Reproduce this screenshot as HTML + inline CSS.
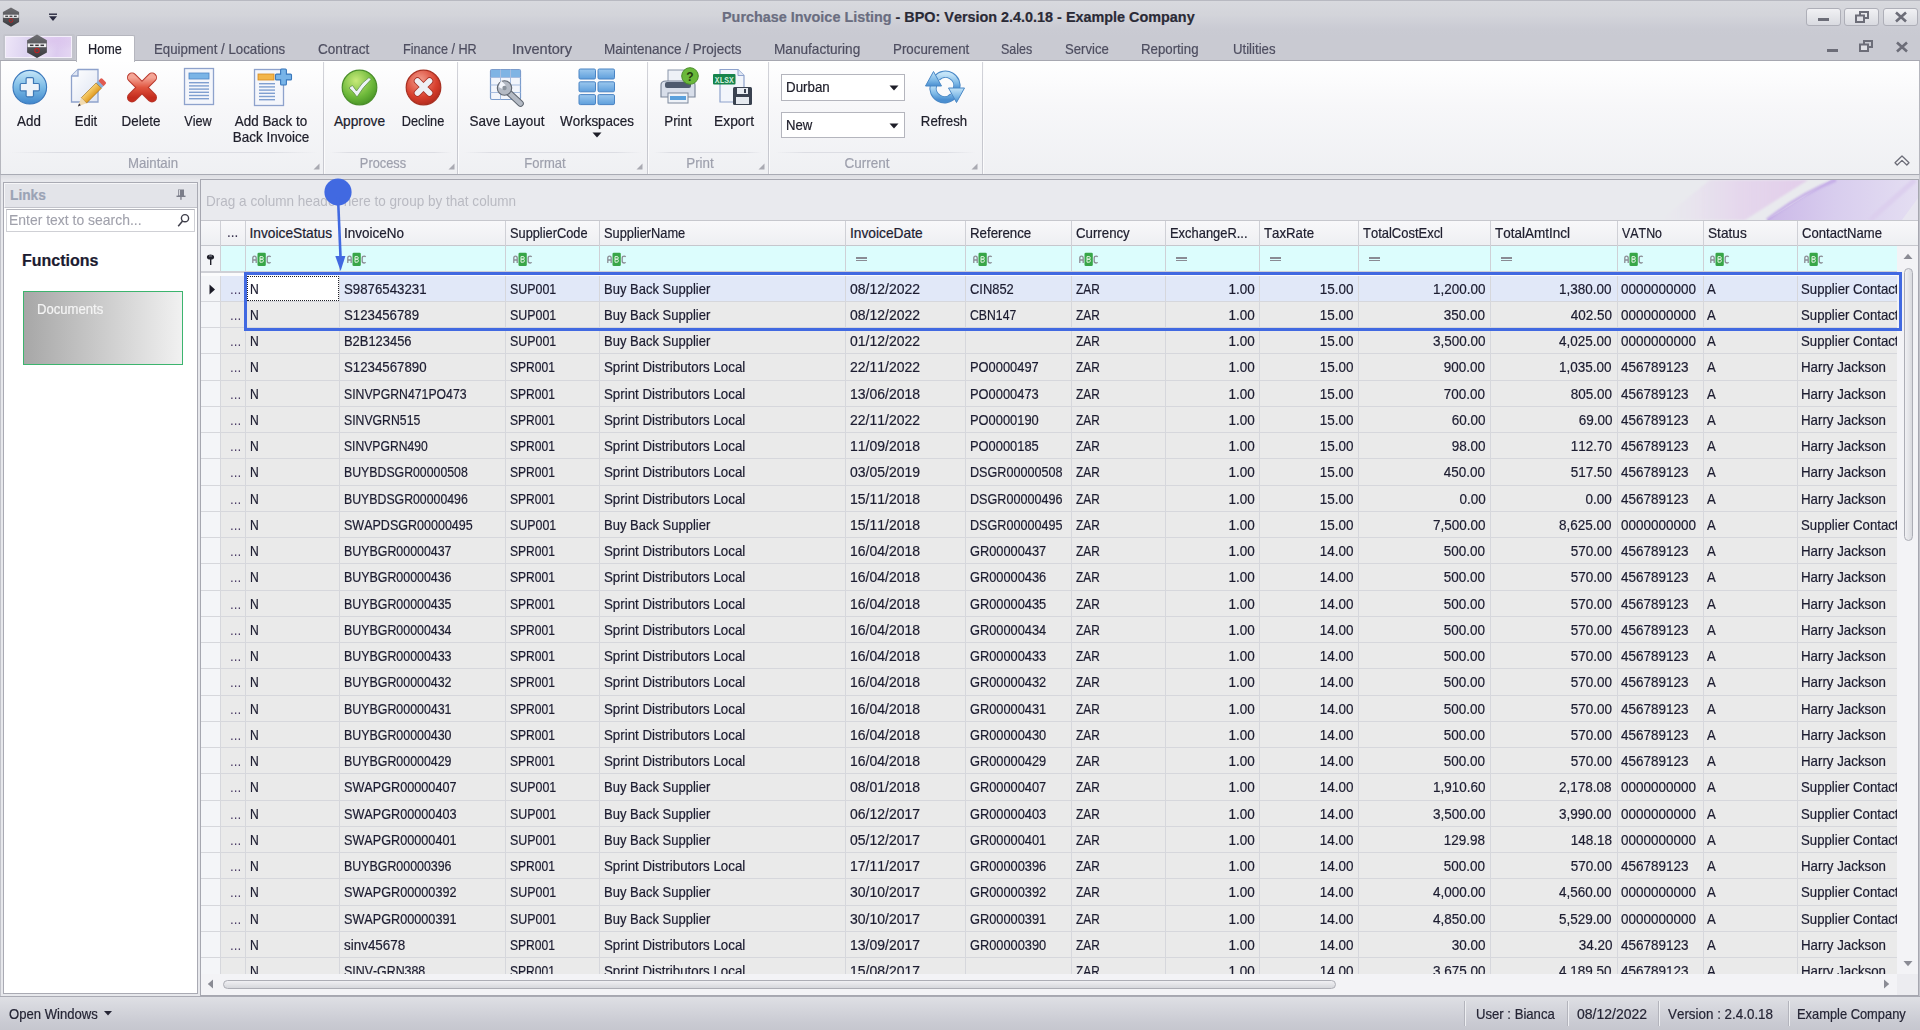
<!DOCTYPE html>
<html><head><meta charset="utf-8"><title>Purchase Invoice Listing</title>
<style>
*{box-sizing:border-box;margin:0;padding:0}
html,body{width:1920px;height:1030px;overflow:hidden;background:#e7e8ec;font-family:"Liberation Sans", sans-serif;font-size:13.75px;color:#1c1c30;position:relative;font-kerning:none}
.a{position:absolute}
.t{position:absolute;white-space:nowrap;line-height:1;-webkit-text-stroke:0.2px currentColor}
svg.a{overflow:visible}
</style></head><body>
<div class="a" style="left:0px;top:0px;width:1920px;height:35px;background:linear-gradient(#d8d9de 0px,#d3d4da 14px,#cacbd3 28px,#c9cad2 35px);border-top:1px solid #b8b9c1"></div>
<div class="a" style="left:0px;top:35px;width:1920px;height:26px;background:#c9cad2;border-bottom:1px solid #a7a8b1"></div>
<div class="a" style="left:0px;top:61px;width:1920px;height:114px;background:linear-gradient(#ffffff 0%,#f7f7f9 40%,#eff0f3 100%);border-bottom:1px solid #a9abb4;border-left:1px solid #b6b7be;border-right:1px solid #b6b7be"></div>
<div class="a" style="left:0px;top:175px;width:1920px;height:6px;background:linear-gradient(#dcdde2,#e9e9ed)"></div>
<div class="a" style="left:0px;top:175px;width:1px;height:821px;background:#c2c3ca"></div>
<div class="a" style="left:1919px;top:175px;width:1px;height:821px;background:#c2c3ca"></div>
<div class="a" style="left:0px;top:996px;width:1920px;height:34px;background:linear-gradient(#dedfe4,#c9cad2 80%,#c6c7cf);border-top:1px solid #a9aab3"></div>
<div class="a" style="left:200px;top:179px;width:1719px;height:817px;background:#f4f4f7;border:1px solid #a6a7b0"></div>
<div class="a" style="left:201px;top:180px;width:1717px;height:40px;background:#e9eaee"></div>
<svg class="a" style="left:1640px;top:180px;overflow:hidden" width="278" height="40" viewBox="0 0 278 40"><defs><linearGradient id="pk" x1="0" y1="0" x2="1" y2="0"><stop offset="0" stop-color="#e6dbee" stop-opacity="0"/><stop offset=".55" stop-color="#e4d2ec" stop-opacity=".8"/><stop offset="1" stop-color="#e2cdea"/></linearGradient><linearGradient id="pp" x1="0" y1="0" x2="1" y2="0"><stop offset="0" stop-color="#cbb8e8"/><stop offset=".45" stop-color="#d8cdee"/><stop offset="1" stop-color="#e4def2"/></linearGradient><filter id="bl"><feGaussianBlur stdDeviation="1.2"/></filter></defs><path d="M20 40 L105 40 L168 0 L70 0 Z" fill="url(#pk)" filter="url(#bl)"/><path d="M127 40 L278 40 L278 0 L191 0 Z" fill="url(#pp)"/><path d="M127 40 Q160 14 196 0" stroke="#c2a9e6" stroke-width="3" fill="none" filter="url(#bl)" opacity=".9"/><path d="M230 40 Q250 22 275 0" stroke="#dccfee" stroke-width="5" fill="none" filter="url(#bl)"/><path d="M262 40 L278 18 L278 40 Z" fill="#e8e6f0"/></svg>
<div class="t" style="left:206px;top:195px;transform:scaleX(0.9844);transform-origin:left center;color:#b9bac2;-webkit-text-stroke:0">Drag a column header here to group by that column</div>
<div class="a" style="left:201px;top:220px;width:1717px;height:25.5px;background:linear-gradient(#f8f8fa,#eeeff2);border-top:1px solid #c6c7cd;border-bottom:1px solid #c6c7cd"></div>
<div class="a" style="left:220.0px;top:221px;width:1px;height:24.5px;background:#cfd0d6"></div>
<div class="a" style="left:244.5px;top:221px;width:1px;height:24.5px;background:#cfd0d6"></div>
<div class="a" style="left:339.0px;top:221px;width:1px;height:24.5px;background:#cfd0d6"></div>
<div class="a" style="left:505.0px;top:221px;width:1px;height:24.5px;background:#cfd0d6"></div>
<div class="a" style="left:599.0px;top:221px;width:1px;height:24.5px;background:#cfd0d6"></div>
<div class="a" style="left:845.0px;top:221px;width:1px;height:24.5px;background:#cfd0d6"></div>
<div class="a" style="left:965.0px;top:221px;width:1px;height:24.5px;background:#cfd0d6"></div>
<div class="a" style="left:1071.0px;top:221px;width:1px;height:24.5px;background:#cfd0d6"></div>
<div class="a" style="left:1165.0px;top:221px;width:1px;height:24.5px;background:#cfd0d6"></div>
<div class="a" style="left:1259.0px;top:221px;width:1px;height:24.5px;background:#cfd0d6"></div>
<div class="a" style="left:1357.5px;top:221px;width:1px;height:24.5px;background:#cfd0d6"></div>
<div class="a" style="left:1490.0px;top:221px;width:1px;height:24.5px;background:#cfd0d6"></div>
<div class="a" style="left:1616.5px;top:221px;width:1px;height:24.5px;background:#cfd0d6"></div>
<div class="a" style="left:1702.5px;top:221px;width:1px;height:24.5px;background:#cfd0d6"></div>
<div class="a" style="left:1796.5px;top:221px;width:1px;height:24.5px;background:#cfd0d6"></div>
<div class="t" style="left:249.5px;top:221px;line-height:25.5px;color:#202030">InvoiceStatus</div>
<div class="t" style="left:344.0px;top:221px;transform:scaleX(0.9813);transform-origin:left center;line-height:25.5px;color:#202030">InvoiceNo</div>
<div class="t" style="left:510.0px;top:221px;transform:scaleX(0.9302);transform-origin:left center;line-height:25.5px;color:#202030">SupplierCode</div>
<div class="t" style="left:604.0px;top:221px;transform:scaleX(0.9326);transform-origin:left center;line-height:25.5px;color:#202030">SupplierName</div>
<div class="t" style="left:850.0px;top:221px;line-height:25.5px;color:#202030">InvoiceDate</div>
<div class="t" style="left:970.0px;top:221px;transform:scaleX(0.9655);transform-origin:left center;line-height:25.5px;color:#202030">Reference</div>
<div class="t" style="left:1076.0px;top:221px;transform:scaleX(0.9636);transform-origin:left center;line-height:25.5px;color:#202030">Currency</div>
<div class="t" style="left:1170.0px;top:221px;transform:scaleX(0.9389);transform-origin:left center;line-height:25.5px;color:#202030">ExchangeR...</div>
<div class="t" style="left:1264.0px;top:221px;transform:scaleX(0.9622);transform-origin:left center;line-height:25.5px;color:#202030">TaxRate</div>
<div class="t" style="left:1362.5px;top:221px;transform:scaleX(0.9432);transform-origin:left center;line-height:25.5px;color:#202030">TotalCostExcl</div>
<div class="t" style="left:1495.0px;top:221px;transform:scaleX(0.9815);transform-origin:left center;line-height:25.5px;color:#202030">TotalAmtIncl</div>
<div class="t" style="left:1621.5px;top:221px;transform:scaleX(0.9026);transform-origin:left center;line-height:25.5px;color:#202030">VATNo</div>
<div class="t" style="left:1707.5px;top:221px;transform:scaleX(0.9941);transform-origin:left center;line-height:25.5px;color:#202030">Status</div>
<div class="t" style="left:1801.5px;top:221px;transform:scaleX(0.9517);transform-origin:left center;line-height:25.5px;color:#202030">ContactName</div>
<div class="t" style="left:227px;top:220px;transform:scaleX(0.9816);transform-origin:left center;line-height:25.5px;color:#3a3450;-webkit-text-stroke:0.1px currentColor">...</div>
<div class="a" style="left:221px;top:245.5px;width:1676px;height:26.0px;background:#dcfdfd"></div>
<div class="a" style="left:201px;top:245.5px;width:20px;height:26.0px;background:#f3f4f7"></div>
<div class="a" style="left:201px;top:271.0px;width:1696px;height:1.5px;background:#cfd0d6"></div>
<div class="a" style="left:201px;top:272.5px;width:1696px;height:3px;background:#fbfbfc"></div>
<div class="a" style="left:220.0px;top:245.5px;width:1px;height:26.0px;background:#cfd0d6"></div>
<div class="a" style="left:244.5px;top:245.5px;width:1px;height:26.0px;background:#cfd0d6"></div>
<div class="a" style="left:339.0px;top:245.5px;width:1px;height:26.0px;background:#cfd0d6"></div>
<div class="a" style="left:505.0px;top:245.5px;width:1px;height:26.0px;background:#cfd0d6"></div>
<div class="a" style="left:599.0px;top:245.5px;width:1px;height:26.0px;background:#cfd0d6"></div>
<div class="a" style="left:845.0px;top:245.5px;width:1px;height:26.0px;background:#cfd0d6"></div>
<div class="a" style="left:965.0px;top:245.5px;width:1px;height:26.0px;background:#cfd0d6"></div>
<div class="a" style="left:1071.0px;top:245.5px;width:1px;height:26.0px;background:#cfd0d6"></div>
<div class="a" style="left:1165.0px;top:245.5px;width:1px;height:26.0px;background:#cfd0d6"></div>
<div class="a" style="left:1259.0px;top:245.5px;width:1px;height:26.0px;background:#cfd0d6"></div>
<div class="a" style="left:1357.5px;top:245.5px;width:1px;height:26.0px;background:#cfd0d6"></div>
<div class="a" style="left:1490.0px;top:245.5px;width:1px;height:26.0px;background:#cfd0d6"></div>
<div class="a" style="left:1616.5px;top:245.5px;width:1px;height:26.0px;background:#cfd0d6"></div>
<div class="a" style="left:1702.5px;top:245.5px;width:1px;height:26.0px;background:#cfd0d6"></div>
<div class="a" style="left:1796.5px;top:245.5px;width:1px;height:26.0px;background:#cfd0d6"></div>
<div class="a" style="left:1896.5px;top:245.5px;width:1px;height:26.0px;background:#cfd0d6"></div>
<svg class="a" style="left:206px;top:254px" width="10" height="12" viewBox="0 0 10 12"><ellipse cx="4.5" cy="3" rx="3.6" ry="2.6" fill="#22222c"/><rect x="1" y="2.6" width="7" height="1.2" fill="#22222c"/><rect x="4" y="4" width="1.4" height="7" fill="#22222c"/><rect x="3" y="1.5" width="3" height="1" fill="#8a8a96"/></svg>
<svg class="a" style="left:252px;top:252px" width="20" height="15" viewBox="0 0 20 15"><path d="M0.8 11 V6.2 Q0.8 4.2 2.5 4.2 Q4.2 4.2 4.2 6.2 V11 M0.8 8 H4.2" stroke="#8b8c94" stroke-width="1.3" fill="none"/><rect x="5.5" y="0.7" width="8.3" height="13.3" rx="1.3" fill="#38a648"/><path d="M8 4.6 h2 q1.3 0 1.3 1.3 q0 1.3 -1.3 1.3 h-2 z M8 7.2 h2.1 q1.3 0 1.3 1.5 q0 1.5 -1.3 1.5 h-2.1 z" stroke="#e2f2e2" stroke-width="1" fill="none"/><path d="M18.6 5 Q18.2 4.2 17.2 4.2 Q15.2 4.2 15.2 6 V9.2 Q15.2 11 17.2 11 Q18.2 11 18.6 10.2" stroke="#8b8c94" stroke-width="1.3" fill="none"/></svg>
<svg class="a" style="left:346.5px;top:252px" width="20" height="15" viewBox="0 0 20 15"><path d="M0.8 11 V6.2 Q0.8 4.2 2.5 4.2 Q4.2 4.2 4.2 6.2 V11 M0.8 8 H4.2" stroke="#8b8c94" stroke-width="1.3" fill="none"/><rect x="5.5" y="0.7" width="8.3" height="13.3" rx="1.3" fill="#38a648"/><path d="M8 4.6 h2 q1.3 0 1.3 1.3 q0 1.3 -1.3 1.3 h-2 z M8 7.2 h2.1 q1.3 0 1.3 1.5 q0 1.5 -1.3 1.5 h-2.1 z" stroke="#e2f2e2" stroke-width="1" fill="none"/><path d="M18.6 5 Q18.2 4.2 17.2 4.2 Q15.2 4.2 15.2 6 V9.2 Q15.2 11 17.2 11 Q18.2 11 18.6 10.2" stroke="#8b8c94" stroke-width="1.3" fill="none"/></svg>
<svg class="a" style="left:512.5px;top:252px" width="20" height="15" viewBox="0 0 20 15"><path d="M0.8 11 V6.2 Q0.8 4.2 2.5 4.2 Q4.2 4.2 4.2 6.2 V11 M0.8 8 H4.2" stroke="#8b8c94" stroke-width="1.3" fill="none"/><rect x="5.5" y="0.7" width="8.3" height="13.3" rx="1.3" fill="#38a648"/><path d="M8 4.6 h2 q1.3 0 1.3 1.3 q0 1.3 -1.3 1.3 h-2 z M8 7.2 h2.1 q1.3 0 1.3 1.5 q0 1.5 -1.3 1.5 h-2.1 z" stroke="#e2f2e2" stroke-width="1" fill="none"/><path d="M18.6 5 Q18.2 4.2 17.2 4.2 Q15.2 4.2 15.2 6 V9.2 Q15.2 11 17.2 11 Q18.2 11 18.6 10.2" stroke="#8b8c94" stroke-width="1.3" fill="none"/></svg>
<svg class="a" style="left:606.5px;top:252px" width="20" height="15" viewBox="0 0 20 15"><path d="M0.8 11 V6.2 Q0.8 4.2 2.5 4.2 Q4.2 4.2 4.2 6.2 V11 M0.8 8 H4.2" stroke="#8b8c94" stroke-width="1.3" fill="none"/><rect x="5.5" y="0.7" width="8.3" height="13.3" rx="1.3" fill="#38a648"/><path d="M8 4.6 h2 q1.3 0 1.3 1.3 q0 1.3 -1.3 1.3 h-2 z M8 7.2 h2.1 q1.3 0 1.3 1.5 q0 1.5 -1.3 1.5 h-2.1 z" stroke="#e2f2e2" stroke-width="1" fill="none"/><path d="M18.6 5 Q18.2 4.2 17.2 4.2 Q15.2 4.2 15.2 6 V9.2 Q15.2 11 17.2 11 Q18.2 11 18.6 10.2" stroke="#8b8c94" stroke-width="1.3" fill="none"/></svg>
<div class="a" style="left:856.0px;top:257.3px;width:11px;height:1.6px;background:#8a8b94"></div>
<div class="a" style="left:856.0px;top:259.90000000000003px;width:11px;height:1.6px;background:#8a8b94"></div>
<svg class="a" style="left:972.5px;top:252px" width="20" height="15" viewBox="0 0 20 15"><path d="M0.8 11 V6.2 Q0.8 4.2 2.5 4.2 Q4.2 4.2 4.2 6.2 V11 M0.8 8 H4.2" stroke="#8b8c94" stroke-width="1.3" fill="none"/><rect x="5.5" y="0.7" width="8.3" height="13.3" rx="1.3" fill="#38a648"/><path d="M8 4.6 h2 q1.3 0 1.3 1.3 q0 1.3 -1.3 1.3 h-2 z M8 7.2 h2.1 q1.3 0 1.3 1.5 q0 1.5 -1.3 1.5 h-2.1 z" stroke="#e2f2e2" stroke-width="1" fill="none"/><path d="M18.6 5 Q18.2 4.2 17.2 4.2 Q15.2 4.2 15.2 6 V9.2 Q15.2 11 17.2 11 Q18.2 11 18.6 10.2" stroke="#8b8c94" stroke-width="1.3" fill="none"/></svg>
<svg class="a" style="left:1078.5px;top:252px" width="20" height="15" viewBox="0 0 20 15"><path d="M0.8 11 V6.2 Q0.8 4.2 2.5 4.2 Q4.2 4.2 4.2 6.2 V11 M0.8 8 H4.2" stroke="#8b8c94" stroke-width="1.3" fill="none"/><rect x="5.5" y="0.7" width="8.3" height="13.3" rx="1.3" fill="#38a648"/><path d="M8 4.6 h2 q1.3 0 1.3 1.3 q0 1.3 -1.3 1.3 h-2 z M8 7.2 h2.1 q1.3 0 1.3 1.5 q0 1.5 -1.3 1.5 h-2.1 z" stroke="#e2f2e2" stroke-width="1" fill="none"/><path d="M18.6 5 Q18.2 4.2 17.2 4.2 Q15.2 4.2 15.2 6 V9.2 Q15.2 11 17.2 11 Q18.2 11 18.6 10.2" stroke="#8b8c94" stroke-width="1.3" fill="none"/></svg>
<div class="a" style="left:1176.0px;top:257.3px;width:11px;height:1.6px;background:#8a8b94"></div>
<div class="a" style="left:1176.0px;top:259.90000000000003px;width:11px;height:1.6px;background:#8a8b94"></div>
<div class="a" style="left:1270.0px;top:257.3px;width:11px;height:1.6px;background:#8a8b94"></div>
<div class="a" style="left:1270.0px;top:259.90000000000003px;width:11px;height:1.6px;background:#8a8b94"></div>
<div class="a" style="left:1368.5px;top:257.3px;width:11px;height:1.6px;background:#8a8b94"></div>
<div class="a" style="left:1368.5px;top:259.90000000000003px;width:11px;height:1.6px;background:#8a8b94"></div>
<div class="a" style="left:1501.0px;top:257.3px;width:11px;height:1.6px;background:#8a8b94"></div>
<div class="a" style="left:1501.0px;top:259.90000000000003px;width:11px;height:1.6px;background:#8a8b94"></div>
<svg class="a" style="left:1624px;top:252px" width="20" height="15" viewBox="0 0 20 15"><path d="M0.8 11 V6.2 Q0.8 4.2 2.5 4.2 Q4.2 4.2 4.2 6.2 V11 M0.8 8 H4.2" stroke="#8b8c94" stroke-width="1.3" fill="none"/><rect x="5.5" y="0.7" width="8.3" height="13.3" rx="1.3" fill="#38a648"/><path d="M8 4.6 h2 q1.3 0 1.3 1.3 q0 1.3 -1.3 1.3 h-2 z M8 7.2 h2.1 q1.3 0 1.3 1.5 q0 1.5 -1.3 1.5 h-2.1 z" stroke="#e2f2e2" stroke-width="1" fill="none"/><path d="M18.6 5 Q18.2 4.2 17.2 4.2 Q15.2 4.2 15.2 6 V9.2 Q15.2 11 17.2 11 Q18.2 11 18.6 10.2" stroke="#8b8c94" stroke-width="1.3" fill="none"/></svg>
<svg class="a" style="left:1710px;top:252px" width="20" height="15" viewBox="0 0 20 15"><path d="M0.8 11 V6.2 Q0.8 4.2 2.5 4.2 Q4.2 4.2 4.2 6.2 V11 M0.8 8 H4.2" stroke="#8b8c94" stroke-width="1.3" fill="none"/><rect x="5.5" y="0.7" width="8.3" height="13.3" rx="1.3" fill="#38a648"/><path d="M8 4.6 h2 q1.3 0 1.3 1.3 q0 1.3 -1.3 1.3 h-2 z M8 7.2 h2.1 q1.3 0 1.3 1.5 q0 1.5 -1.3 1.5 h-2.1 z" stroke="#e2f2e2" stroke-width="1" fill="none"/><path d="M18.6 5 Q18.2 4.2 17.2 4.2 Q15.2 4.2 15.2 6 V9.2 Q15.2 11 17.2 11 Q18.2 11 18.6 10.2" stroke="#8b8c94" stroke-width="1.3" fill="none"/></svg>
<svg class="a" style="left:1804px;top:252px" width="20" height="15" viewBox="0 0 20 15"><path d="M0.8 11 V6.2 Q0.8 4.2 2.5 4.2 Q4.2 4.2 4.2 6.2 V11 M0.8 8 H4.2" stroke="#8b8c94" stroke-width="1.3" fill="none"/><rect x="5.5" y="0.7" width="8.3" height="13.3" rx="1.3" fill="#38a648"/><path d="M8 4.6 h2 q1.3 0 1.3 1.3 q0 1.3 -1.3 1.3 h-2 z M8 7.2 h2.1 q1.3 0 1.3 1.5 q0 1.5 -1.3 1.5 h-2.1 z" stroke="#e2f2e2" stroke-width="1" fill="none"/><path d="M18.6 5 Q18.2 4.2 17.2 4.2 Q15.2 4.2 15.2 6 V9.2 Q15.2 11 17.2 11 Q18.2 11 18.6 10.2" stroke="#8b8c94" stroke-width="1.3" fill="none"/></svg>
<div class="a" style="left:201px;top:274.5px;width:1696px;height:699.5px;overflow:hidden">
<div class="a" style="left:20px;top:1.0px;width:1676px;height:699.5px;background:#eaeaea"></div>
<div class="a" style="left:0px;top:1.0px;width:20px;height:699.5px;background:#f4f5f8"></div>
<div class="a" style="left:20px;top:1.0px;width:1676px;height:26.25px;background:#e1e8f8"></div>
<div class="a" style="left:45px;top:1.0px;width:93px;height:26.25px;background:#ffffff"></div>
<div class="a" style="left:19.0px;top:1.0px;width:1px;height:699.5px;background:#d6d7dc"></div>
<div class="a" style="left:43.5px;top:1.0px;width:1px;height:699.5px;background:#d6d7dc"></div>
<div class="a" style="left:138.0px;top:1.0px;width:1px;height:699.5px;background:#d6d7dc"></div>
<div class="a" style="left:304.0px;top:1.0px;width:1px;height:699.5px;background:#d6d7dc"></div>
<div class="a" style="left:398.0px;top:1.0px;width:1px;height:699.5px;background:#d6d7dc"></div>
<div class="a" style="left:644.0px;top:1.0px;width:1px;height:699.5px;background:#d6d7dc"></div>
<div class="a" style="left:764.0px;top:1.0px;width:1px;height:699.5px;background:#d6d7dc"></div>
<div class="a" style="left:870.0px;top:1.0px;width:1px;height:699.5px;background:#d6d7dc"></div>
<div class="a" style="left:964.0px;top:1.0px;width:1px;height:699.5px;background:#d6d7dc"></div>
<div class="a" style="left:1058.0px;top:1.0px;width:1px;height:699.5px;background:#d6d7dc"></div>
<div class="a" style="left:1156.5px;top:1.0px;width:1px;height:699.5px;background:#d6d7dc"></div>
<div class="a" style="left:1289.0px;top:1.0px;width:1px;height:699.5px;background:#d6d7dc"></div>
<div class="a" style="left:1415.5px;top:1.0px;width:1px;height:699.5px;background:#d6d7dc"></div>
<div class="a" style="left:1501.5px;top:1.0px;width:1px;height:699.5px;background:#d6d7dc"></div>
<div class="a" style="left:1595.5px;top:1.0px;width:1px;height:699.5px;background:#d6d7dc"></div>
<div class="a" style="left:1695.5px;top:1.0px;width:1px;height:699.5px;background:#d6d7dc"></div>
<div class="a" style="left:0px;top:26.25px;width:1696px;height:1px;background:#d6d7dc"></div>
<div class="a" style="left:0px;top:52.5px;width:1696px;height:1px;background:#d6d7dc"></div>
<div class="a" style="left:0px;top:78.75px;width:1696px;height:1px;background:#d6d7dc"></div>
<div class="a" style="left:0px;top:105.0px;width:1696px;height:1px;background:#d6d7dc"></div>
<div class="a" style="left:0px;top:131.25px;width:1696px;height:1px;background:#d6d7dc"></div>
<div class="a" style="left:0px;top:157.5px;width:1696px;height:1px;background:#d6d7dc"></div>
<div class="a" style="left:0px;top:183.75px;width:1696px;height:1px;background:#d6d7dc"></div>
<div class="a" style="left:0px;top:210.0px;width:1696px;height:1px;background:#d6d7dc"></div>
<div class="a" style="left:0px;top:236.25px;width:1696px;height:1px;background:#d6d7dc"></div>
<div class="a" style="left:0px;top:262.5px;width:1696px;height:1px;background:#d6d7dc"></div>
<div class="a" style="left:0px;top:288.75px;width:1696px;height:1px;background:#d6d7dc"></div>
<div class="a" style="left:0px;top:315.0px;width:1696px;height:1px;background:#d6d7dc"></div>
<div class="a" style="left:0px;top:341.25px;width:1696px;height:1px;background:#d6d7dc"></div>
<div class="a" style="left:0px;top:367.5px;width:1696px;height:1px;background:#d6d7dc"></div>
<div class="a" style="left:0px;top:393.75px;width:1696px;height:1px;background:#d6d7dc"></div>
<div class="a" style="left:0px;top:420.0px;width:1696px;height:1px;background:#d6d7dc"></div>
<div class="a" style="left:0px;top:446.25px;width:1696px;height:1px;background:#d6d7dc"></div>
<div class="a" style="left:0px;top:472.5px;width:1696px;height:1px;background:#d6d7dc"></div>
<div class="a" style="left:0px;top:498.75px;width:1696px;height:1px;background:#d6d7dc"></div>
<div class="a" style="left:0px;top:525.0px;width:1696px;height:1px;background:#d6d7dc"></div>
<div class="a" style="left:0px;top:551.25px;width:1696px;height:1px;background:#d6d7dc"></div>
<div class="a" style="left:0px;top:577.5px;width:1696px;height:1px;background:#d6d7dc"></div>
<div class="a" style="left:0px;top:603.75px;width:1696px;height:1px;background:#d6d7dc"></div>
<div class="a" style="left:0px;top:630.0px;width:1696px;height:1px;background:#d6d7dc"></div>
<div class="a" style="left:0px;top:656.25px;width:1696px;height:1px;background:#d6d7dc"></div>
<div class="a" style="left:0px;top:682.5px;width:1696px;height:1px;background:#d6d7dc"></div>
<div class="a" style="left:0px;top:708.75px;width:1696px;height:1px;background:#d6d7dc"></div>
<div class="t" style="left:49px;top:2.0px;transform:scaleX(0.8812);transform-origin:left center;line-height:26.25px">N</div>
<div class="t" style="left:29px;top:2.0px;transform:scaleX(0.9816);transform-origin:left center;line-height:26.25px;color:#4a3c66;-webkit-text-stroke:0">...</div>
<div class="t" style="left:142.5px;top:2.0px;transform:scaleX(0.9633);transform-origin:left center;line-height:26.25px">S9876543231</div>
<div class="t" style="left:308.5px;top:2.0px;transform:scaleX(0.9031);transform-origin:left center;line-height:26.25px">SUP001</div>
<div class="t" style="left:402.5px;top:2.0px;transform:scaleX(0.9457);transform-origin:left center;line-height:26.25px">Buy Back Supplier</div>
<div class="t" style="left:648.5px;top:2.0px;transform:scaleX(1.0172);transform-origin:left center;line-height:26.25px">08/12/2022</div>
<div class="t" style="left:768.5px;top:2.0px;transform:scaleX(0.9384);transform-origin:left center;line-height:26.25px">CIN852</div>
<div class="t" style="left:874.5px;top:2.0px;transform:scaleX(0.8636);transform-origin:left center;line-height:26.25px">ZAR</div>
<div class="t" style="right:642.5px;top:2.0px;transform:scaleX(0.9809);transform-origin:right center;line-height:26.25px">1.00</div>
<div class="t" style="right:544px;top:2.0px;transform:scaleX(0.9809);transform-origin:right center;line-height:26.25px">15.00</div>
<div class="t" style="right:411.5px;top:2.0px;transform:scaleX(0.9809);transform-origin:right center;line-height:26.25px">1,200.00</div>
<div class="t" style="right:285px;top:2.0px;transform:scaleX(0.9809);transform-origin:right center;line-height:26.25px">1,380.00</div>
<div class="t" style="left:1420px;top:2.0px;transform:scaleX(0.9808);transform-origin:left center;line-height:26.25px">0000000000</div>
<div class="t" style="left:1506px;top:2.0px;transform:scaleX(0.9541);transform-origin:left center;line-height:26.25px">A</div>
<div class="t" style="left:1600px;top:2.0px;transform:scaleX(0.9591);transform-origin:left center;line-height:26.25px">Supplier Contact</div>
<div class="t" style="left:49px;top:28.25px;transform:scaleX(0.8812);transform-origin:left center;line-height:26.25px">N</div>
<div class="t" style="left:29px;top:28.25px;transform:scaleX(0.9816);transform-origin:left center;line-height:26.25px;color:#4a3c66;-webkit-text-stroke:0">...</div>
<div class="t" style="left:142.5px;top:28.25px;transform:scaleX(0.9616);transform-origin:left center;line-height:26.25px">S123456789</div>
<div class="t" style="left:308.5px;top:28.25px;transform:scaleX(0.9031);transform-origin:left center;line-height:26.25px">SUP001</div>
<div class="t" style="left:402.5px;top:28.25px;transform:scaleX(0.9457);transform-origin:left center;line-height:26.25px">Buy Back Supplier</div>
<div class="t" style="left:648.5px;top:28.25px;transform:scaleX(1.0172);transform-origin:left center;line-height:26.25px">08/12/2022</div>
<div class="t" style="left:768.5px;top:28.25px;transform:scaleX(0.8899);transform-origin:left center;line-height:26.25px">CBN147</div>
<div class="t" style="left:874.5px;top:28.25px;transform:scaleX(0.8636);transform-origin:left center;line-height:26.25px">ZAR</div>
<div class="t" style="right:642.5px;top:28.25px;transform:scaleX(0.9809);transform-origin:right center;line-height:26.25px">1.00</div>
<div class="t" style="right:544px;top:28.25px;transform:scaleX(0.9809);transform-origin:right center;line-height:26.25px">15.00</div>
<div class="t" style="right:411.5px;top:28.25px;transform:scaleX(0.9808);transform-origin:right center;line-height:26.25px">350.00</div>
<div class="t" style="right:285px;top:28.25px;transform:scaleX(0.9808);transform-origin:right center;line-height:26.25px">402.50</div>
<div class="t" style="left:1420px;top:28.25px;transform:scaleX(0.9808);transform-origin:left center;line-height:26.25px">0000000000</div>
<div class="t" style="left:1506px;top:28.25px;transform:scaleX(0.9541);transform-origin:left center;line-height:26.25px">A</div>
<div class="t" style="left:1600px;top:28.25px;transform:scaleX(0.9591);transform-origin:left center;line-height:26.25px">Supplier Contact</div>
<div class="t" style="left:49px;top:54.5px;transform:scaleX(0.8812);transform-origin:left center;line-height:26.25px">N</div>
<div class="t" style="left:29px;top:54.5px;transform:scaleX(0.9816);transform-origin:left center;line-height:26.25px;color:#4a3c66;-webkit-text-stroke:0">...</div>
<div class="t" style="left:142.5px;top:54.5px;transform:scaleX(0.9392);transform-origin:left center;line-height:26.25px">B2B123456</div>
<div class="t" style="left:308.5px;top:54.5px;transform:scaleX(0.9031);transform-origin:left center;line-height:26.25px">SUP001</div>
<div class="t" style="left:402.5px;top:54.5px;transform:scaleX(0.9457);transform-origin:left center;line-height:26.25px">Buy Back Supplier</div>
<div class="t" style="left:648.5px;top:54.5px;transform:scaleX(1.0172);transform-origin:left center;line-height:26.25px">01/12/2022</div>
<div class="t" style="left:874.5px;top:54.5px;transform:scaleX(0.8636);transform-origin:left center;line-height:26.25px">ZAR</div>
<div class="t" style="right:642.5px;top:54.5px;transform:scaleX(0.9809);transform-origin:right center;line-height:26.25px">1.00</div>
<div class="t" style="right:544px;top:54.5px;transform:scaleX(0.9809);transform-origin:right center;line-height:26.25px">15.00</div>
<div class="t" style="right:411.5px;top:54.5px;transform:scaleX(0.9809);transform-origin:right center;line-height:26.25px">3,500.00</div>
<div class="t" style="right:285px;top:54.5px;transform:scaleX(0.9809);transform-origin:right center;line-height:26.25px">4,025.00</div>
<div class="t" style="left:1420px;top:54.5px;transform:scaleX(0.9808);transform-origin:left center;line-height:26.25px">0000000000</div>
<div class="t" style="left:1506px;top:54.5px;transform:scaleX(0.9541);transform-origin:left center;line-height:26.25px">A</div>
<div class="t" style="left:1600px;top:54.5px;transform:scaleX(0.9591);transform-origin:left center;line-height:26.25px">Supplier Contact</div>
<div class="t" style="left:49px;top:80.75px;transform:scaleX(0.8812);transform-origin:left center;line-height:26.25px">N</div>
<div class="t" style="left:29px;top:80.75px;transform:scaleX(0.9816);transform-origin:left center;line-height:26.25px;color:#4a3c66;-webkit-text-stroke:0">...</div>
<div class="t" style="left:142.5px;top:80.75px;transform:scaleX(0.9633);transform-origin:left center;line-height:26.25px">S1234567890</div>
<div class="t" style="left:308.5px;top:80.75px;transform:scaleX(0.8787);transform-origin:left center;line-height:26.25px">SPR001</div>
<div class="t" style="left:402.5px;top:80.75px;transform:scaleX(0.9677);transform-origin:left center;line-height:26.25px">Sprint Distributors Local</div>
<div class="t" style="left:648.5px;top:80.75px;transform:scaleX(1.0172);transform-origin:left center;line-height:26.25px">22/11/2022</div>
<div class="t" style="left:768.5px;top:80.75px;transform:scaleX(0.9367);transform-origin:left center;line-height:26.25px">PO0000497</div>
<div class="t" style="left:874.5px;top:80.75px;transform:scaleX(0.8636);transform-origin:left center;line-height:26.25px">ZAR</div>
<div class="t" style="right:642.5px;top:80.75px;transform:scaleX(0.9809);transform-origin:right center;line-height:26.25px">1.00</div>
<div class="t" style="right:544px;top:80.75px;transform:scaleX(0.9809);transform-origin:right center;line-height:26.25px">15.00</div>
<div class="t" style="right:411.5px;top:80.75px;transform:scaleX(0.9808);transform-origin:right center;line-height:26.25px">900.00</div>
<div class="t" style="right:285px;top:80.75px;transform:scaleX(0.9809);transform-origin:right center;line-height:26.25px">1,035.00</div>
<div class="t" style="left:1420px;top:80.75px;transform:scaleX(0.9808);transform-origin:left center;line-height:26.25px">456789123</div>
<div class="t" style="left:1506px;top:80.75px;transform:scaleX(0.9541);transform-origin:left center;line-height:26.25px">A</div>
<div class="t" style="left:1600px;top:80.75px;transform:scaleX(0.9673);transform-origin:left center;line-height:26.25px">Harry Jackson</div>
<div class="t" style="left:49px;top:107.0px;transform:scaleX(0.8812);transform-origin:left center;line-height:26.25px">N</div>
<div class="t" style="left:29px;top:107.0px;transform:scaleX(0.9816);transform-origin:left center;line-height:26.25px;color:#4a3c66;-webkit-text-stroke:0">...</div>
<div class="t" style="left:142.5px;top:107.0px;transform:scaleX(0.8905);transform-origin:left center;line-height:26.25px">SINVPGRN471PO473</div>
<div class="t" style="left:308.5px;top:107.0px;transform:scaleX(0.8787);transform-origin:left center;line-height:26.25px">SPR001</div>
<div class="t" style="left:402.5px;top:107.0px;transform:scaleX(0.9677);transform-origin:left center;line-height:26.25px">Sprint Distributors Local</div>
<div class="t" style="left:648.5px;top:107.0px;transform:scaleX(1.0172);transform-origin:left center;line-height:26.25px">13/06/2018</div>
<div class="t" style="left:768.5px;top:107.0px;transform:scaleX(0.9367);transform-origin:left center;line-height:26.25px">PO0000473</div>
<div class="t" style="left:874.5px;top:107.0px;transform:scaleX(0.8636);transform-origin:left center;line-height:26.25px">ZAR</div>
<div class="t" style="right:642.5px;top:107.0px;transform:scaleX(0.9809);transform-origin:right center;line-height:26.25px">1.00</div>
<div class="t" style="right:544px;top:107.0px;transform:scaleX(0.9809);transform-origin:right center;line-height:26.25px">15.00</div>
<div class="t" style="right:411.5px;top:107.0px;transform:scaleX(0.9808);transform-origin:right center;line-height:26.25px">700.00</div>
<div class="t" style="right:285px;top:107.0px;transform:scaleX(0.9808);transform-origin:right center;line-height:26.25px">805.00</div>
<div class="t" style="left:1420px;top:107.0px;transform:scaleX(0.9808);transform-origin:left center;line-height:26.25px">456789123</div>
<div class="t" style="left:1506px;top:107.0px;transform:scaleX(0.9541);transform-origin:left center;line-height:26.25px">A</div>
<div class="t" style="left:1600px;top:107.0px;transform:scaleX(0.9673);transform-origin:left center;line-height:26.25px">Harry Jackson</div>
<div class="t" style="left:49px;top:133.25px;transform:scaleX(0.8812);transform-origin:left center;line-height:26.25px">N</div>
<div class="t" style="left:29px;top:133.25px;transform:scaleX(0.9816);transform-origin:left center;line-height:26.25px;color:#4a3c66;-webkit-text-stroke:0">...</div>
<div class="t" style="left:142.5px;top:133.25px;transform:scaleX(0.8909);transform-origin:left center;line-height:26.25px">SINVGRN515</div>
<div class="t" style="left:308.5px;top:133.25px;transform:scaleX(0.8787);transform-origin:left center;line-height:26.25px">SPR001</div>
<div class="t" style="left:402.5px;top:133.25px;transform:scaleX(0.9677);transform-origin:left center;line-height:26.25px">Sprint Distributors Local</div>
<div class="t" style="left:648.5px;top:133.25px;transform:scaleX(1.0172);transform-origin:left center;line-height:26.25px">22/11/2022</div>
<div class="t" style="left:768.5px;top:133.25px;transform:scaleX(0.9367);transform-origin:left center;line-height:26.25px">PO0000190</div>
<div class="t" style="left:874.5px;top:133.25px;transform:scaleX(0.8636);transform-origin:left center;line-height:26.25px">ZAR</div>
<div class="t" style="right:642.5px;top:133.25px;transform:scaleX(0.9809);transform-origin:right center;line-height:26.25px">1.00</div>
<div class="t" style="right:544px;top:133.25px;transform:scaleX(0.9809);transform-origin:right center;line-height:26.25px">15.00</div>
<div class="t" style="right:411.5px;top:133.25px;transform:scaleX(0.9809);transform-origin:right center;line-height:26.25px">60.00</div>
<div class="t" style="right:285px;top:133.25px;transform:scaleX(0.9809);transform-origin:right center;line-height:26.25px">69.00</div>
<div class="t" style="left:1420px;top:133.25px;transform:scaleX(0.9808);transform-origin:left center;line-height:26.25px">456789123</div>
<div class="t" style="left:1506px;top:133.25px;transform:scaleX(0.9541);transform-origin:left center;line-height:26.25px">A</div>
<div class="t" style="left:1600px;top:133.25px;transform:scaleX(0.9673);transform-origin:left center;line-height:26.25px">Harry Jackson</div>
<div class="t" style="left:49px;top:159.5px;transform:scaleX(0.8812);transform-origin:left center;line-height:26.25px">N</div>
<div class="t" style="left:29px;top:159.5px;transform:scaleX(0.9816);transform-origin:left center;line-height:26.25px;color:#4a3c66;-webkit-text-stroke:0">...</div>
<div class="t" style="left:142.5px;top:159.5px;transform:scaleX(0.8838);transform-origin:left center;line-height:26.25px">SINVPGRN490</div>
<div class="t" style="left:308.5px;top:159.5px;transform:scaleX(0.8787);transform-origin:left center;line-height:26.25px">SPR001</div>
<div class="t" style="left:402.5px;top:159.5px;transform:scaleX(0.9677);transform-origin:left center;line-height:26.25px">Sprint Distributors Local</div>
<div class="t" style="left:648.5px;top:159.5px;transform:scaleX(1.0172);transform-origin:left center;line-height:26.25px">11/09/2018</div>
<div class="t" style="left:768.5px;top:159.5px;transform:scaleX(0.9367);transform-origin:left center;line-height:26.25px">PO0000185</div>
<div class="t" style="left:874.5px;top:159.5px;transform:scaleX(0.8636);transform-origin:left center;line-height:26.25px">ZAR</div>
<div class="t" style="right:642.5px;top:159.5px;transform:scaleX(0.9809);transform-origin:right center;line-height:26.25px">1.00</div>
<div class="t" style="right:544px;top:159.5px;transform:scaleX(0.9809);transform-origin:right center;line-height:26.25px">15.00</div>
<div class="t" style="right:411.5px;top:159.5px;transform:scaleX(0.9809);transform-origin:right center;line-height:26.25px">98.00</div>
<div class="t" style="right:285px;top:159.5px;transform:scaleX(0.9808);transform-origin:right center;line-height:26.25px">112.70</div>
<div class="t" style="left:1420px;top:159.5px;transform:scaleX(0.9808);transform-origin:left center;line-height:26.25px">456789123</div>
<div class="t" style="left:1506px;top:159.5px;transform:scaleX(0.9541);transform-origin:left center;line-height:26.25px">A</div>
<div class="t" style="left:1600px;top:159.5px;transform:scaleX(0.9673);transform-origin:left center;line-height:26.25px">Harry Jackson</div>
<div class="t" style="left:49px;top:185.75px;transform:scaleX(0.8812);transform-origin:left center;line-height:26.25px">N</div>
<div class="t" style="left:29px;top:185.75px;transform:scaleX(0.9816);transform-origin:left center;line-height:26.25px;color:#4a3c66;-webkit-text-stroke:0">...</div>
<div class="t" style="left:142.5px;top:185.75px;transform:scaleX(0.8945);transform-origin:left center;line-height:26.25px">BUYBDSGR00000508</div>
<div class="t" style="left:308.5px;top:185.75px;transform:scaleX(0.8787);transform-origin:left center;line-height:26.25px">SPR001</div>
<div class="t" style="left:402.5px;top:185.75px;transform:scaleX(0.9677);transform-origin:left center;line-height:26.25px">Sprint Distributors Local</div>
<div class="t" style="left:648.5px;top:185.75px;transform:scaleX(1.0172);transform-origin:left center;line-height:26.25px">03/05/2019</div>
<div class="t" style="left:768.5px;top:185.75px;transform:scaleX(0.9167);transform-origin:left center;line-height:26.25px">DSGR00000508</div>
<div class="t" style="left:874.5px;top:185.75px;transform:scaleX(0.8636);transform-origin:left center;line-height:26.25px">ZAR</div>
<div class="t" style="right:642.5px;top:185.75px;transform:scaleX(0.9809);transform-origin:right center;line-height:26.25px">1.00</div>
<div class="t" style="right:544px;top:185.75px;transform:scaleX(0.9809);transform-origin:right center;line-height:26.25px">15.00</div>
<div class="t" style="right:411.5px;top:185.75px;transform:scaleX(0.9808);transform-origin:right center;line-height:26.25px">450.00</div>
<div class="t" style="right:285px;top:185.75px;transform:scaleX(0.9808);transform-origin:right center;line-height:26.25px">517.50</div>
<div class="t" style="left:1420px;top:185.75px;transform:scaleX(0.9808);transform-origin:left center;line-height:26.25px">456789123</div>
<div class="t" style="left:1506px;top:185.75px;transform:scaleX(0.9541);transform-origin:left center;line-height:26.25px">A</div>
<div class="t" style="left:1600px;top:185.75px;transform:scaleX(0.9673);transform-origin:left center;line-height:26.25px">Harry Jackson</div>
<div class="t" style="left:49px;top:212.0px;transform:scaleX(0.8812);transform-origin:left center;line-height:26.25px">N</div>
<div class="t" style="left:29px;top:212.0px;transform:scaleX(0.9816);transform-origin:left center;line-height:26.25px;color:#4a3c66;-webkit-text-stroke:0">...</div>
<div class="t" style="left:142.5px;top:212.0px;transform:scaleX(0.8945);transform-origin:left center;line-height:26.25px">BUYBDSGR00000496</div>
<div class="t" style="left:308.5px;top:212.0px;transform:scaleX(0.8787);transform-origin:left center;line-height:26.25px">SPR001</div>
<div class="t" style="left:402.5px;top:212.0px;transform:scaleX(0.9677);transform-origin:left center;line-height:26.25px">Sprint Distributors Local</div>
<div class="t" style="left:648.5px;top:212.0px;transform:scaleX(1.0172);transform-origin:left center;line-height:26.25px">15/11/2018</div>
<div class="t" style="left:768.5px;top:212.0px;transform:scaleX(0.9167);transform-origin:left center;line-height:26.25px">DSGR00000496</div>
<div class="t" style="left:874.5px;top:212.0px;transform:scaleX(0.8636);transform-origin:left center;line-height:26.25px">ZAR</div>
<div class="t" style="right:642.5px;top:212.0px;transform:scaleX(0.9809);transform-origin:right center;line-height:26.25px">1.00</div>
<div class="t" style="right:544px;top:212.0px;transform:scaleX(0.9809);transform-origin:right center;line-height:26.25px">15.00</div>
<div class="t" style="right:411.5px;top:212.0px;transform:scaleX(0.9809);transform-origin:right center;line-height:26.25px">0.00</div>
<div class="t" style="right:285px;top:212.0px;transform:scaleX(0.9809);transform-origin:right center;line-height:26.25px">0.00</div>
<div class="t" style="left:1420px;top:212.0px;transform:scaleX(0.9808);transform-origin:left center;line-height:26.25px">456789123</div>
<div class="t" style="left:1506px;top:212.0px;transform:scaleX(0.9541);transform-origin:left center;line-height:26.25px">A</div>
<div class="t" style="left:1600px;top:212.0px;transform:scaleX(0.9673);transform-origin:left center;line-height:26.25px">Harry Jackson</div>
<div class="t" style="left:49px;top:238.25px;transform:scaleX(0.8812);transform-origin:left center;line-height:26.25px">N</div>
<div class="t" style="left:29px;top:238.25px;transform:scaleX(0.9816);transform-origin:left center;line-height:26.25px;color:#4a3c66;-webkit-text-stroke:0">...</div>
<div class="t" style="left:142.5px;top:238.25px;transform:scaleX(0.9106);transform-origin:left center;line-height:26.25px">SWAPDSGR00000495</div>
<div class="t" style="left:308.5px;top:238.25px;transform:scaleX(0.9031);transform-origin:left center;line-height:26.25px">SUP001</div>
<div class="t" style="left:402.5px;top:238.25px;transform:scaleX(0.9457);transform-origin:left center;line-height:26.25px">Buy Back Supplier</div>
<div class="t" style="left:648.5px;top:238.25px;transform:scaleX(1.0172);transform-origin:left center;line-height:26.25px">15/11/2018</div>
<div class="t" style="left:768.5px;top:238.25px;transform:scaleX(0.9167);transform-origin:left center;line-height:26.25px">DSGR00000495</div>
<div class="t" style="left:874.5px;top:238.25px;transform:scaleX(0.8636);transform-origin:left center;line-height:26.25px">ZAR</div>
<div class="t" style="right:642.5px;top:238.25px;transform:scaleX(0.9809);transform-origin:right center;line-height:26.25px">1.00</div>
<div class="t" style="right:544px;top:238.25px;transform:scaleX(0.9809);transform-origin:right center;line-height:26.25px">15.00</div>
<div class="t" style="right:411.5px;top:238.25px;transform:scaleX(0.9809);transform-origin:right center;line-height:26.25px">7,500.00</div>
<div class="t" style="right:285px;top:238.25px;transform:scaleX(0.9809);transform-origin:right center;line-height:26.25px">8,625.00</div>
<div class="t" style="left:1420px;top:238.25px;transform:scaleX(0.9808);transform-origin:left center;line-height:26.25px">0000000000</div>
<div class="t" style="left:1506px;top:238.25px;transform:scaleX(0.9541);transform-origin:left center;line-height:26.25px">A</div>
<div class="t" style="left:1600px;top:238.25px;transform:scaleX(0.9591);transform-origin:left center;line-height:26.25px">Supplier Contact</div>
<div class="t" style="left:49px;top:264.5px;transform:scaleX(0.8812);transform-origin:left center;line-height:26.25px">N</div>
<div class="t" style="left:29px;top:264.5px;transform:scaleX(0.9816);transform-origin:left center;line-height:26.25px;color:#4a3c66;-webkit-text-stroke:0">...</div>
<div class="t" style="left:142.5px;top:264.5px;transform:scaleX(0.9015);transform-origin:left center;line-height:26.25px">BUYBGR00000437</div>
<div class="t" style="left:308.5px;top:264.5px;transform:scaleX(0.8787);transform-origin:left center;line-height:26.25px">SPR001</div>
<div class="t" style="left:402.5px;top:264.5px;transform:scaleX(0.9677);transform-origin:left center;line-height:26.25px">Sprint Distributors Local</div>
<div class="t" style="left:648.5px;top:264.5px;transform:scaleX(1.0172);transform-origin:left center;line-height:26.25px">16/04/2018</div>
<div class="t" style="left:768.5px;top:264.5px;transform:scaleX(0.9321);transform-origin:left center;line-height:26.25px">GR00000437</div>
<div class="t" style="left:874.5px;top:264.5px;transform:scaleX(0.8636);transform-origin:left center;line-height:26.25px">ZAR</div>
<div class="t" style="right:642.5px;top:264.5px;transform:scaleX(0.9809);transform-origin:right center;line-height:26.25px">1.00</div>
<div class="t" style="right:544px;top:264.5px;transform:scaleX(0.9809);transform-origin:right center;line-height:26.25px">14.00</div>
<div class="t" style="right:411.5px;top:264.5px;transform:scaleX(0.9808);transform-origin:right center;line-height:26.25px">500.00</div>
<div class="t" style="right:285px;top:264.5px;transform:scaleX(0.9808);transform-origin:right center;line-height:26.25px">570.00</div>
<div class="t" style="left:1420px;top:264.5px;transform:scaleX(0.9808);transform-origin:left center;line-height:26.25px">456789123</div>
<div class="t" style="left:1506px;top:264.5px;transform:scaleX(0.9541);transform-origin:left center;line-height:26.25px">A</div>
<div class="t" style="left:1600px;top:264.5px;transform:scaleX(0.9673);transform-origin:left center;line-height:26.25px">Harry Jackson</div>
<div class="t" style="left:49px;top:290.75px;transform:scaleX(0.8812);transform-origin:left center;line-height:26.25px">N</div>
<div class="t" style="left:29px;top:290.75px;transform:scaleX(0.9816);transform-origin:left center;line-height:26.25px;color:#4a3c66;-webkit-text-stroke:0">...</div>
<div class="t" style="left:142.5px;top:290.75px;transform:scaleX(0.9015);transform-origin:left center;line-height:26.25px">BUYBGR00000436</div>
<div class="t" style="left:308.5px;top:290.75px;transform:scaleX(0.8787);transform-origin:left center;line-height:26.25px">SPR001</div>
<div class="t" style="left:402.5px;top:290.75px;transform:scaleX(0.9677);transform-origin:left center;line-height:26.25px">Sprint Distributors Local</div>
<div class="t" style="left:648.5px;top:290.75px;transform:scaleX(1.0172);transform-origin:left center;line-height:26.25px">16/04/2018</div>
<div class="t" style="left:768.5px;top:290.75px;transform:scaleX(0.9321);transform-origin:left center;line-height:26.25px">GR00000436</div>
<div class="t" style="left:874.5px;top:290.75px;transform:scaleX(0.8636);transform-origin:left center;line-height:26.25px">ZAR</div>
<div class="t" style="right:642.5px;top:290.75px;transform:scaleX(0.9809);transform-origin:right center;line-height:26.25px">1.00</div>
<div class="t" style="right:544px;top:290.75px;transform:scaleX(0.9809);transform-origin:right center;line-height:26.25px">14.00</div>
<div class="t" style="right:411.5px;top:290.75px;transform:scaleX(0.9808);transform-origin:right center;line-height:26.25px">500.00</div>
<div class="t" style="right:285px;top:290.75px;transform:scaleX(0.9808);transform-origin:right center;line-height:26.25px">570.00</div>
<div class="t" style="left:1420px;top:290.75px;transform:scaleX(0.9808);transform-origin:left center;line-height:26.25px">456789123</div>
<div class="t" style="left:1506px;top:290.75px;transform:scaleX(0.9541);transform-origin:left center;line-height:26.25px">A</div>
<div class="t" style="left:1600px;top:290.75px;transform:scaleX(0.9673);transform-origin:left center;line-height:26.25px">Harry Jackson</div>
<div class="t" style="left:49px;top:317.0px;transform:scaleX(0.8812);transform-origin:left center;line-height:26.25px">N</div>
<div class="t" style="left:29px;top:317.0px;transform:scaleX(0.9816);transform-origin:left center;line-height:26.25px;color:#4a3c66;-webkit-text-stroke:0">...</div>
<div class="t" style="left:142.5px;top:317.0px;transform:scaleX(0.9015);transform-origin:left center;line-height:26.25px">BUYBGR00000435</div>
<div class="t" style="left:308.5px;top:317.0px;transform:scaleX(0.8787);transform-origin:left center;line-height:26.25px">SPR001</div>
<div class="t" style="left:402.5px;top:317.0px;transform:scaleX(0.9677);transform-origin:left center;line-height:26.25px">Sprint Distributors Local</div>
<div class="t" style="left:648.5px;top:317.0px;transform:scaleX(1.0172);transform-origin:left center;line-height:26.25px">16/04/2018</div>
<div class="t" style="left:768.5px;top:317.0px;transform:scaleX(0.9321);transform-origin:left center;line-height:26.25px">GR00000435</div>
<div class="t" style="left:874.5px;top:317.0px;transform:scaleX(0.8636);transform-origin:left center;line-height:26.25px">ZAR</div>
<div class="t" style="right:642.5px;top:317.0px;transform:scaleX(0.9809);transform-origin:right center;line-height:26.25px">1.00</div>
<div class="t" style="right:544px;top:317.0px;transform:scaleX(0.9809);transform-origin:right center;line-height:26.25px">14.00</div>
<div class="t" style="right:411.5px;top:317.0px;transform:scaleX(0.9808);transform-origin:right center;line-height:26.25px">500.00</div>
<div class="t" style="right:285px;top:317.0px;transform:scaleX(0.9808);transform-origin:right center;line-height:26.25px">570.00</div>
<div class="t" style="left:1420px;top:317.0px;transform:scaleX(0.9808);transform-origin:left center;line-height:26.25px">456789123</div>
<div class="t" style="left:1506px;top:317.0px;transform:scaleX(0.9541);transform-origin:left center;line-height:26.25px">A</div>
<div class="t" style="left:1600px;top:317.0px;transform:scaleX(0.9673);transform-origin:left center;line-height:26.25px">Harry Jackson</div>
<div class="t" style="left:49px;top:343.25px;transform:scaleX(0.8812);transform-origin:left center;line-height:26.25px">N</div>
<div class="t" style="left:29px;top:343.25px;transform:scaleX(0.9816);transform-origin:left center;line-height:26.25px;color:#4a3c66;-webkit-text-stroke:0">...</div>
<div class="t" style="left:142.5px;top:343.25px;transform:scaleX(0.9015);transform-origin:left center;line-height:26.25px">BUYBGR00000434</div>
<div class="t" style="left:308.5px;top:343.25px;transform:scaleX(0.8787);transform-origin:left center;line-height:26.25px">SPR001</div>
<div class="t" style="left:402.5px;top:343.25px;transform:scaleX(0.9677);transform-origin:left center;line-height:26.25px">Sprint Distributors Local</div>
<div class="t" style="left:648.5px;top:343.25px;transform:scaleX(1.0172);transform-origin:left center;line-height:26.25px">16/04/2018</div>
<div class="t" style="left:768.5px;top:343.25px;transform:scaleX(0.9321);transform-origin:left center;line-height:26.25px">GR00000434</div>
<div class="t" style="left:874.5px;top:343.25px;transform:scaleX(0.8636);transform-origin:left center;line-height:26.25px">ZAR</div>
<div class="t" style="right:642.5px;top:343.25px;transform:scaleX(0.9809);transform-origin:right center;line-height:26.25px">1.00</div>
<div class="t" style="right:544px;top:343.25px;transform:scaleX(0.9809);transform-origin:right center;line-height:26.25px">14.00</div>
<div class="t" style="right:411.5px;top:343.25px;transform:scaleX(0.9808);transform-origin:right center;line-height:26.25px">500.00</div>
<div class="t" style="right:285px;top:343.25px;transform:scaleX(0.9808);transform-origin:right center;line-height:26.25px">570.00</div>
<div class="t" style="left:1420px;top:343.25px;transform:scaleX(0.9808);transform-origin:left center;line-height:26.25px">456789123</div>
<div class="t" style="left:1506px;top:343.25px;transform:scaleX(0.9541);transform-origin:left center;line-height:26.25px">A</div>
<div class="t" style="left:1600px;top:343.25px;transform:scaleX(0.9673);transform-origin:left center;line-height:26.25px">Harry Jackson</div>
<div class="t" style="left:49px;top:369.5px;transform:scaleX(0.8812);transform-origin:left center;line-height:26.25px">N</div>
<div class="t" style="left:29px;top:369.5px;transform:scaleX(0.9816);transform-origin:left center;line-height:26.25px;color:#4a3c66;-webkit-text-stroke:0">...</div>
<div class="t" style="left:142.5px;top:369.5px;transform:scaleX(0.9015);transform-origin:left center;line-height:26.25px">BUYBGR00000433</div>
<div class="t" style="left:308.5px;top:369.5px;transform:scaleX(0.8787);transform-origin:left center;line-height:26.25px">SPR001</div>
<div class="t" style="left:402.5px;top:369.5px;transform:scaleX(0.9677);transform-origin:left center;line-height:26.25px">Sprint Distributors Local</div>
<div class="t" style="left:648.5px;top:369.5px;transform:scaleX(1.0172);transform-origin:left center;line-height:26.25px">16/04/2018</div>
<div class="t" style="left:768.5px;top:369.5px;transform:scaleX(0.9321);transform-origin:left center;line-height:26.25px">GR00000433</div>
<div class="t" style="left:874.5px;top:369.5px;transform:scaleX(0.8636);transform-origin:left center;line-height:26.25px">ZAR</div>
<div class="t" style="right:642.5px;top:369.5px;transform:scaleX(0.9809);transform-origin:right center;line-height:26.25px">1.00</div>
<div class="t" style="right:544px;top:369.5px;transform:scaleX(0.9809);transform-origin:right center;line-height:26.25px">14.00</div>
<div class="t" style="right:411.5px;top:369.5px;transform:scaleX(0.9808);transform-origin:right center;line-height:26.25px">500.00</div>
<div class="t" style="right:285px;top:369.5px;transform:scaleX(0.9808);transform-origin:right center;line-height:26.25px">570.00</div>
<div class="t" style="left:1420px;top:369.5px;transform:scaleX(0.9808);transform-origin:left center;line-height:26.25px">456789123</div>
<div class="t" style="left:1506px;top:369.5px;transform:scaleX(0.9541);transform-origin:left center;line-height:26.25px">A</div>
<div class="t" style="left:1600px;top:369.5px;transform:scaleX(0.9673);transform-origin:left center;line-height:26.25px">Harry Jackson</div>
<div class="t" style="left:49px;top:395.75px;transform:scaleX(0.8812);transform-origin:left center;line-height:26.25px">N</div>
<div class="t" style="left:29px;top:395.75px;transform:scaleX(0.9816);transform-origin:left center;line-height:26.25px;color:#4a3c66;-webkit-text-stroke:0">...</div>
<div class="t" style="left:142.5px;top:395.75px;transform:scaleX(0.9015);transform-origin:left center;line-height:26.25px">BUYBGR00000432</div>
<div class="t" style="left:308.5px;top:395.75px;transform:scaleX(0.8787);transform-origin:left center;line-height:26.25px">SPR001</div>
<div class="t" style="left:402.5px;top:395.75px;transform:scaleX(0.9677);transform-origin:left center;line-height:26.25px">Sprint Distributors Local</div>
<div class="t" style="left:648.5px;top:395.75px;transform:scaleX(1.0172);transform-origin:left center;line-height:26.25px">16/04/2018</div>
<div class="t" style="left:768.5px;top:395.75px;transform:scaleX(0.9321);transform-origin:left center;line-height:26.25px">GR00000432</div>
<div class="t" style="left:874.5px;top:395.75px;transform:scaleX(0.8636);transform-origin:left center;line-height:26.25px">ZAR</div>
<div class="t" style="right:642.5px;top:395.75px;transform:scaleX(0.9809);transform-origin:right center;line-height:26.25px">1.00</div>
<div class="t" style="right:544px;top:395.75px;transform:scaleX(0.9809);transform-origin:right center;line-height:26.25px">14.00</div>
<div class="t" style="right:411.5px;top:395.75px;transform:scaleX(0.9808);transform-origin:right center;line-height:26.25px">500.00</div>
<div class="t" style="right:285px;top:395.75px;transform:scaleX(0.9808);transform-origin:right center;line-height:26.25px">570.00</div>
<div class="t" style="left:1420px;top:395.75px;transform:scaleX(0.9808);transform-origin:left center;line-height:26.25px">456789123</div>
<div class="t" style="left:1506px;top:395.75px;transform:scaleX(0.9541);transform-origin:left center;line-height:26.25px">A</div>
<div class="t" style="left:1600px;top:395.75px;transform:scaleX(0.9673);transform-origin:left center;line-height:26.25px">Harry Jackson</div>
<div class="t" style="left:49px;top:422.0px;transform:scaleX(0.8812);transform-origin:left center;line-height:26.25px">N</div>
<div class="t" style="left:29px;top:422.0px;transform:scaleX(0.9816);transform-origin:left center;line-height:26.25px;color:#4a3c66;-webkit-text-stroke:0">...</div>
<div class="t" style="left:142.5px;top:422.0px;transform:scaleX(0.9015);transform-origin:left center;line-height:26.25px">BUYBGR00000431</div>
<div class="t" style="left:308.5px;top:422.0px;transform:scaleX(0.8787);transform-origin:left center;line-height:26.25px">SPR001</div>
<div class="t" style="left:402.5px;top:422.0px;transform:scaleX(0.9677);transform-origin:left center;line-height:26.25px">Sprint Distributors Local</div>
<div class="t" style="left:648.5px;top:422.0px;transform:scaleX(1.0172);transform-origin:left center;line-height:26.25px">16/04/2018</div>
<div class="t" style="left:768.5px;top:422.0px;transform:scaleX(0.9321);transform-origin:left center;line-height:26.25px">GR00000431</div>
<div class="t" style="left:874.5px;top:422.0px;transform:scaleX(0.8636);transform-origin:left center;line-height:26.25px">ZAR</div>
<div class="t" style="right:642.5px;top:422.0px;transform:scaleX(0.9809);transform-origin:right center;line-height:26.25px">1.00</div>
<div class="t" style="right:544px;top:422.0px;transform:scaleX(0.9809);transform-origin:right center;line-height:26.25px">14.00</div>
<div class="t" style="right:411.5px;top:422.0px;transform:scaleX(0.9808);transform-origin:right center;line-height:26.25px">500.00</div>
<div class="t" style="right:285px;top:422.0px;transform:scaleX(0.9808);transform-origin:right center;line-height:26.25px">570.00</div>
<div class="t" style="left:1420px;top:422.0px;transform:scaleX(0.9808);transform-origin:left center;line-height:26.25px">456789123</div>
<div class="t" style="left:1506px;top:422.0px;transform:scaleX(0.9541);transform-origin:left center;line-height:26.25px">A</div>
<div class="t" style="left:1600px;top:422.0px;transform:scaleX(0.9673);transform-origin:left center;line-height:26.25px">Harry Jackson</div>
<div class="t" style="left:49px;top:448.25px;transform:scaleX(0.8812);transform-origin:left center;line-height:26.25px">N</div>
<div class="t" style="left:29px;top:448.25px;transform:scaleX(0.9816);transform-origin:left center;line-height:26.25px;color:#4a3c66;-webkit-text-stroke:0">...</div>
<div class="t" style="left:142.5px;top:448.25px;transform:scaleX(0.9015);transform-origin:left center;line-height:26.25px">BUYBGR00000430</div>
<div class="t" style="left:308.5px;top:448.25px;transform:scaleX(0.8787);transform-origin:left center;line-height:26.25px">SPR001</div>
<div class="t" style="left:402.5px;top:448.25px;transform:scaleX(0.9677);transform-origin:left center;line-height:26.25px">Sprint Distributors Local</div>
<div class="t" style="left:648.5px;top:448.25px;transform:scaleX(1.0172);transform-origin:left center;line-height:26.25px">16/04/2018</div>
<div class="t" style="left:768.5px;top:448.25px;transform:scaleX(0.9321);transform-origin:left center;line-height:26.25px">GR00000430</div>
<div class="t" style="left:874.5px;top:448.25px;transform:scaleX(0.8636);transform-origin:left center;line-height:26.25px">ZAR</div>
<div class="t" style="right:642.5px;top:448.25px;transform:scaleX(0.9809);transform-origin:right center;line-height:26.25px">1.00</div>
<div class="t" style="right:544px;top:448.25px;transform:scaleX(0.9809);transform-origin:right center;line-height:26.25px">14.00</div>
<div class="t" style="right:411.5px;top:448.25px;transform:scaleX(0.9808);transform-origin:right center;line-height:26.25px">500.00</div>
<div class="t" style="right:285px;top:448.25px;transform:scaleX(0.9808);transform-origin:right center;line-height:26.25px">570.00</div>
<div class="t" style="left:1420px;top:448.25px;transform:scaleX(0.9808);transform-origin:left center;line-height:26.25px">456789123</div>
<div class="t" style="left:1506px;top:448.25px;transform:scaleX(0.9541);transform-origin:left center;line-height:26.25px">A</div>
<div class="t" style="left:1600px;top:448.25px;transform:scaleX(0.9673);transform-origin:left center;line-height:26.25px">Harry Jackson</div>
<div class="t" style="left:49px;top:474.5px;transform:scaleX(0.8812);transform-origin:left center;line-height:26.25px">N</div>
<div class="t" style="left:29px;top:474.5px;transform:scaleX(0.9816);transform-origin:left center;line-height:26.25px;color:#4a3c66;-webkit-text-stroke:0">...</div>
<div class="t" style="left:142.5px;top:474.5px;transform:scaleX(0.9015);transform-origin:left center;line-height:26.25px">BUYBGR00000429</div>
<div class="t" style="left:308.5px;top:474.5px;transform:scaleX(0.8787);transform-origin:left center;line-height:26.25px">SPR001</div>
<div class="t" style="left:402.5px;top:474.5px;transform:scaleX(0.9677);transform-origin:left center;line-height:26.25px">Sprint Distributors Local</div>
<div class="t" style="left:648.5px;top:474.5px;transform:scaleX(1.0172);transform-origin:left center;line-height:26.25px">16/04/2018</div>
<div class="t" style="left:768.5px;top:474.5px;transform:scaleX(0.9321);transform-origin:left center;line-height:26.25px">GR00000429</div>
<div class="t" style="left:874.5px;top:474.5px;transform:scaleX(0.8636);transform-origin:left center;line-height:26.25px">ZAR</div>
<div class="t" style="right:642.5px;top:474.5px;transform:scaleX(0.9809);transform-origin:right center;line-height:26.25px">1.00</div>
<div class="t" style="right:544px;top:474.5px;transform:scaleX(0.9809);transform-origin:right center;line-height:26.25px">14.00</div>
<div class="t" style="right:411.5px;top:474.5px;transform:scaleX(0.9808);transform-origin:right center;line-height:26.25px">500.00</div>
<div class="t" style="right:285px;top:474.5px;transform:scaleX(0.9808);transform-origin:right center;line-height:26.25px">570.00</div>
<div class="t" style="left:1420px;top:474.5px;transform:scaleX(0.9808);transform-origin:left center;line-height:26.25px">456789123</div>
<div class="t" style="left:1506px;top:474.5px;transform:scaleX(0.9541);transform-origin:left center;line-height:26.25px">A</div>
<div class="t" style="left:1600px;top:474.5px;transform:scaleX(0.9673);transform-origin:left center;line-height:26.25px">Harry Jackson</div>
<div class="t" style="left:49px;top:500.75px;transform:scaleX(0.8812);transform-origin:left center;line-height:26.25px">N</div>
<div class="t" style="left:29px;top:500.75px;transform:scaleX(0.9816);transform-origin:left center;line-height:26.25px;color:#4a3c66;-webkit-text-stroke:0">...</div>
<div class="t" style="left:142.5px;top:500.75px;transform:scaleX(0.9199);transform-origin:left center;line-height:26.25px">SWAPGR00000407</div>
<div class="t" style="left:308.5px;top:500.75px;transform:scaleX(0.9031);transform-origin:left center;line-height:26.25px">SUP001</div>
<div class="t" style="left:402.5px;top:500.75px;transform:scaleX(0.9457);transform-origin:left center;line-height:26.25px">Buy Back Supplier</div>
<div class="t" style="left:648.5px;top:500.75px;transform:scaleX(1.0172);transform-origin:left center;line-height:26.25px">08/01/2018</div>
<div class="t" style="left:768.5px;top:500.75px;transform:scaleX(0.9321);transform-origin:left center;line-height:26.25px">GR00000407</div>
<div class="t" style="left:874.5px;top:500.75px;transform:scaleX(0.8636);transform-origin:left center;line-height:26.25px">ZAR</div>
<div class="t" style="right:642.5px;top:500.75px;transform:scaleX(0.9809);transform-origin:right center;line-height:26.25px">1.00</div>
<div class="t" style="right:544px;top:500.75px;transform:scaleX(0.9809);transform-origin:right center;line-height:26.25px">14.00</div>
<div class="t" style="right:411.5px;top:500.75px;transform:scaleX(0.9809);transform-origin:right center;line-height:26.25px">1,910.60</div>
<div class="t" style="right:285px;top:500.75px;transform:scaleX(0.9809);transform-origin:right center;line-height:26.25px">2,178.08</div>
<div class="t" style="left:1420px;top:500.75px;transform:scaleX(0.9808);transform-origin:left center;line-height:26.25px">0000000000</div>
<div class="t" style="left:1506px;top:500.75px;transform:scaleX(0.9541);transform-origin:left center;line-height:26.25px">A</div>
<div class="t" style="left:1600px;top:500.75px;transform:scaleX(0.9591);transform-origin:left center;line-height:26.25px">Supplier Contact</div>
<div class="t" style="left:49px;top:527.0px;transform:scaleX(0.8812);transform-origin:left center;line-height:26.25px">N</div>
<div class="t" style="left:29px;top:527.0px;transform:scaleX(0.9816);transform-origin:left center;line-height:26.25px;color:#4a3c66;-webkit-text-stroke:0">...</div>
<div class="t" style="left:142.5px;top:527.0px;transform:scaleX(0.9199);transform-origin:left center;line-height:26.25px">SWAPGR00000403</div>
<div class="t" style="left:308.5px;top:527.0px;transform:scaleX(0.9031);transform-origin:left center;line-height:26.25px">SUP001</div>
<div class="t" style="left:402.5px;top:527.0px;transform:scaleX(0.9457);transform-origin:left center;line-height:26.25px">Buy Back Supplier</div>
<div class="t" style="left:648.5px;top:527.0px;transform:scaleX(1.0172);transform-origin:left center;line-height:26.25px">06/12/2017</div>
<div class="t" style="left:768.5px;top:527.0px;transform:scaleX(0.9321);transform-origin:left center;line-height:26.25px">GR00000403</div>
<div class="t" style="left:874.5px;top:527.0px;transform:scaleX(0.8636);transform-origin:left center;line-height:26.25px">ZAR</div>
<div class="t" style="right:642.5px;top:527.0px;transform:scaleX(0.9809);transform-origin:right center;line-height:26.25px">1.00</div>
<div class="t" style="right:544px;top:527.0px;transform:scaleX(0.9809);transform-origin:right center;line-height:26.25px">14.00</div>
<div class="t" style="right:411.5px;top:527.0px;transform:scaleX(0.9809);transform-origin:right center;line-height:26.25px">3,500.00</div>
<div class="t" style="right:285px;top:527.0px;transform:scaleX(0.9809);transform-origin:right center;line-height:26.25px">3,990.00</div>
<div class="t" style="left:1420px;top:527.0px;transform:scaleX(0.9808);transform-origin:left center;line-height:26.25px">0000000000</div>
<div class="t" style="left:1506px;top:527.0px;transform:scaleX(0.9541);transform-origin:left center;line-height:26.25px">A</div>
<div class="t" style="left:1600px;top:527.0px;transform:scaleX(0.9591);transform-origin:left center;line-height:26.25px">Supplier Contact</div>
<div class="t" style="left:49px;top:553.25px;transform:scaleX(0.8812);transform-origin:left center;line-height:26.25px">N</div>
<div class="t" style="left:29px;top:553.25px;transform:scaleX(0.9816);transform-origin:left center;line-height:26.25px;color:#4a3c66;-webkit-text-stroke:0">...</div>
<div class="t" style="left:142.5px;top:553.25px;transform:scaleX(0.9199);transform-origin:left center;line-height:26.25px">SWAPGR00000401</div>
<div class="t" style="left:308.5px;top:553.25px;transform:scaleX(0.9031);transform-origin:left center;line-height:26.25px">SUP001</div>
<div class="t" style="left:402.5px;top:553.25px;transform:scaleX(0.9457);transform-origin:left center;line-height:26.25px">Buy Back Supplier</div>
<div class="t" style="left:648.5px;top:553.25px;transform:scaleX(1.0172);transform-origin:left center;line-height:26.25px">05/12/2017</div>
<div class="t" style="left:768.5px;top:553.25px;transform:scaleX(0.9321);transform-origin:left center;line-height:26.25px">GR00000401</div>
<div class="t" style="left:874.5px;top:553.25px;transform:scaleX(0.8636);transform-origin:left center;line-height:26.25px">ZAR</div>
<div class="t" style="right:642.5px;top:553.25px;transform:scaleX(0.9809);transform-origin:right center;line-height:26.25px">1.00</div>
<div class="t" style="right:544px;top:553.25px;transform:scaleX(0.9809);transform-origin:right center;line-height:26.25px">14.00</div>
<div class="t" style="right:411.5px;top:553.25px;transform:scaleX(0.9808);transform-origin:right center;line-height:26.25px">129.98</div>
<div class="t" style="right:285px;top:553.25px;transform:scaleX(0.9808);transform-origin:right center;line-height:26.25px">148.18</div>
<div class="t" style="left:1420px;top:553.25px;transform:scaleX(0.9808);transform-origin:left center;line-height:26.25px">0000000000</div>
<div class="t" style="left:1506px;top:553.25px;transform:scaleX(0.9541);transform-origin:left center;line-height:26.25px">A</div>
<div class="t" style="left:1600px;top:553.25px;transform:scaleX(0.9591);transform-origin:left center;line-height:26.25px">Supplier Contact</div>
<div class="t" style="left:49px;top:579.5px;transform:scaleX(0.8812);transform-origin:left center;line-height:26.25px">N</div>
<div class="t" style="left:29px;top:579.5px;transform:scaleX(0.9816);transform-origin:left center;line-height:26.25px;color:#4a3c66;-webkit-text-stroke:0">...</div>
<div class="t" style="left:142.5px;top:579.5px;transform:scaleX(0.9015);transform-origin:left center;line-height:26.25px">BUYBGR00000396</div>
<div class="t" style="left:308.5px;top:579.5px;transform:scaleX(0.8787);transform-origin:left center;line-height:26.25px">SPR001</div>
<div class="t" style="left:402.5px;top:579.5px;transform:scaleX(0.9677);transform-origin:left center;line-height:26.25px">Sprint Distributors Local</div>
<div class="t" style="left:648.5px;top:579.5px;transform:scaleX(1.0172);transform-origin:left center;line-height:26.25px">17/11/2017</div>
<div class="t" style="left:768.5px;top:579.5px;transform:scaleX(0.9321);transform-origin:left center;line-height:26.25px">GR00000396</div>
<div class="t" style="left:874.5px;top:579.5px;transform:scaleX(0.8636);transform-origin:left center;line-height:26.25px">ZAR</div>
<div class="t" style="right:642.5px;top:579.5px;transform:scaleX(0.9809);transform-origin:right center;line-height:26.25px">1.00</div>
<div class="t" style="right:544px;top:579.5px;transform:scaleX(0.9809);transform-origin:right center;line-height:26.25px">14.00</div>
<div class="t" style="right:411.5px;top:579.5px;transform:scaleX(0.9808);transform-origin:right center;line-height:26.25px">500.00</div>
<div class="t" style="right:285px;top:579.5px;transform:scaleX(0.9808);transform-origin:right center;line-height:26.25px">570.00</div>
<div class="t" style="left:1420px;top:579.5px;transform:scaleX(0.9808);transform-origin:left center;line-height:26.25px">456789123</div>
<div class="t" style="left:1506px;top:579.5px;transform:scaleX(0.9541);transform-origin:left center;line-height:26.25px">A</div>
<div class="t" style="left:1600px;top:579.5px;transform:scaleX(0.9673);transform-origin:left center;line-height:26.25px">Harry Jackson</div>
<div class="t" style="left:49px;top:605.75px;transform:scaleX(0.8812);transform-origin:left center;line-height:26.25px">N</div>
<div class="t" style="left:29px;top:605.75px;transform:scaleX(0.9816);transform-origin:left center;line-height:26.25px;color:#4a3c66;-webkit-text-stroke:0">...</div>
<div class="t" style="left:142.5px;top:605.75px;transform:scaleX(0.9199);transform-origin:left center;line-height:26.25px">SWAPGR00000392</div>
<div class="t" style="left:308.5px;top:605.75px;transform:scaleX(0.9031);transform-origin:left center;line-height:26.25px">SUP001</div>
<div class="t" style="left:402.5px;top:605.75px;transform:scaleX(0.9457);transform-origin:left center;line-height:26.25px">Buy Back Supplier</div>
<div class="t" style="left:648.5px;top:605.75px;transform:scaleX(1.0172);transform-origin:left center;line-height:26.25px">30/10/2017</div>
<div class="t" style="left:768.5px;top:605.75px;transform:scaleX(0.9321);transform-origin:left center;line-height:26.25px">GR00000392</div>
<div class="t" style="left:874.5px;top:605.75px;transform:scaleX(0.8636);transform-origin:left center;line-height:26.25px">ZAR</div>
<div class="t" style="right:642.5px;top:605.75px;transform:scaleX(0.9809);transform-origin:right center;line-height:26.25px">1.00</div>
<div class="t" style="right:544px;top:605.75px;transform:scaleX(0.9809);transform-origin:right center;line-height:26.25px">14.00</div>
<div class="t" style="right:411.5px;top:605.75px;transform:scaleX(0.9809);transform-origin:right center;line-height:26.25px">4,000.00</div>
<div class="t" style="right:285px;top:605.75px;transform:scaleX(0.9809);transform-origin:right center;line-height:26.25px">4,560.00</div>
<div class="t" style="left:1420px;top:605.75px;transform:scaleX(0.9808);transform-origin:left center;line-height:26.25px">0000000000</div>
<div class="t" style="left:1506px;top:605.75px;transform:scaleX(0.9541);transform-origin:left center;line-height:26.25px">A</div>
<div class="t" style="left:1600px;top:605.75px;transform:scaleX(0.9591);transform-origin:left center;line-height:26.25px">Supplier Contact</div>
<div class="t" style="left:49px;top:632.0px;transform:scaleX(0.8812);transform-origin:left center;line-height:26.25px">N</div>
<div class="t" style="left:29px;top:632.0px;transform:scaleX(0.9816);transform-origin:left center;line-height:26.25px;color:#4a3c66;-webkit-text-stroke:0">...</div>
<div class="t" style="left:142.5px;top:632.0px;transform:scaleX(0.9199);transform-origin:left center;line-height:26.25px">SWAPGR00000391</div>
<div class="t" style="left:308.5px;top:632.0px;transform:scaleX(0.9031);transform-origin:left center;line-height:26.25px">SUP001</div>
<div class="t" style="left:402.5px;top:632.0px;transform:scaleX(0.9457);transform-origin:left center;line-height:26.25px">Buy Back Supplier</div>
<div class="t" style="left:648.5px;top:632.0px;transform:scaleX(1.0172);transform-origin:left center;line-height:26.25px">30/10/2017</div>
<div class="t" style="left:768.5px;top:632.0px;transform:scaleX(0.9321);transform-origin:left center;line-height:26.25px">GR00000391</div>
<div class="t" style="left:874.5px;top:632.0px;transform:scaleX(0.8636);transform-origin:left center;line-height:26.25px">ZAR</div>
<div class="t" style="right:642.5px;top:632.0px;transform:scaleX(0.9809);transform-origin:right center;line-height:26.25px">1.00</div>
<div class="t" style="right:544px;top:632.0px;transform:scaleX(0.9809);transform-origin:right center;line-height:26.25px">14.00</div>
<div class="t" style="right:411.5px;top:632.0px;transform:scaleX(0.9809);transform-origin:right center;line-height:26.25px">4,850.00</div>
<div class="t" style="right:285px;top:632.0px;transform:scaleX(0.9809);transform-origin:right center;line-height:26.25px">5,529.00</div>
<div class="t" style="left:1420px;top:632.0px;transform:scaleX(0.9808);transform-origin:left center;line-height:26.25px">0000000000</div>
<div class="t" style="left:1506px;top:632.0px;transform:scaleX(0.9541);transform-origin:left center;line-height:26.25px">A</div>
<div class="t" style="left:1600px;top:632.0px;transform:scaleX(0.9591);transform-origin:left center;line-height:26.25px">Supplier Contact</div>
<div class="t" style="left:49px;top:658.25px;transform:scaleX(0.8812);transform-origin:left center;line-height:26.25px">N</div>
<div class="t" style="left:29px;top:658.25px;transform:scaleX(0.9816);transform-origin:left center;line-height:26.25px;color:#4a3c66;-webkit-text-stroke:0">...</div>
<div class="t" style="left:142.5px;top:658.25px;transform:scaleX(0.9771);transform-origin:left center;line-height:26.25px">sinv45678</div>
<div class="t" style="left:308.5px;top:658.25px;transform:scaleX(0.8787);transform-origin:left center;line-height:26.25px">SPR001</div>
<div class="t" style="left:402.5px;top:658.25px;transform:scaleX(0.9677);transform-origin:left center;line-height:26.25px">Sprint Distributors Local</div>
<div class="t" style="left:648.5px;top:658.25px;transform:scaleX(1.0172);transform-origin:left center;line-height:26.25px">13/09/2017</div>
<div class="t" style="left:768.5px;top:658.25px;transform:scaleX(0.9321);transform-origin:left center;line-height:26.25px">GR00000390</div>
<div class="t" style="left:874.5px;top:658.25px;transform:scaleX(0.8636);transform-origin:left center;line-height:26.25px">ZAR</div>
<div class="t" style="right:642.5px;top:658.25px;transform:scaleX(0.9809);transform-origin:right center;line-height:26.25px">1.00</div>
<div class="t" style="right:544px;top:658.25px;transform:scaleX(0.9809);transform-origin:right center;line-height:26.25px">14.00</div>
<div class="t" style="right:411.5px;top:658.25px;transform:scaleX(0.9809);transform-origin:right center;line-height:26.25px">30.00</div>
<div class="t" style="right:285px;top:658.25px;transform:scaleX(0.9809);transform-origin:right center;line-height:26.25px">34.20</div>
<div class="t" style="left:1420px;top:658.25px;transform:scaleX(0.9808);transform-origin:left center;line-height:26.25px">456789123</div>
<div class="t" style="left:1506px;top:658.25px;transform:scaleX(0.9541);transform-origin:left center;line-height:26.25px">A</div>
<div class="t" style="left:1600px;top:658.25px;transform:scaleX(0.9673);transform-origin:left center;line-height:26.25px">Harry Jackson</div>
<div class="t" style="left:49px;top:684.5px;transform:scaleX(0.8812);transform-origin:left center;line-height:26.25px">N</div>
<div class="t" style="left:29px;top:684.5px;transform:scaleX(0.9816);transform-origin:left center;line-height:26.25px;color:#4a3c66;-webkit-text-stroke:0">...</div>
<div class="t" style="left:142.5px;top:684.5px;transform:scaleX(0.9011);transform-origin:left center;line-height:26.25px">SINV-GRN388</div>
<div class="t" style="left:308.5px;top:684.5px;transform:scaleX(0.8787);transform-origin:left center;line-height:26.25px">SPR001</div>
<div class="t" style="left:402.5px;top:684.5px;transform:scaleX(0.9677);transform-origin:left center;line-height:26.25px">Sprint Distributors Local</div>
<div class="t" style="left:648.5px;top:684.5px;transform:scaleX(1.0172);transform-origin:left center;line-height:26.25px">15/08/2017</div>
<div class="t" style="left:874.5px;top:684.5px;transform:scaleX(0.8636);transform-origin:left center;line-height:26.25px">ZAR</div>
<div class="t" style="right:642.5px;top:684.5px;transform:scaleX(0.9809);transform-origin:right center;line-height:26.25px">1.00</div>
<div class="t" style="right:544px;top:684.5px;transform:scaleX(0.9809);transform-origin:right center;line-height:26.25px">14.00</div>
<div class="t" style="right:411.5px;top:684.5px;transform:scaleX(0.9809);transform-origin:right center;line-height:26.25px">3,675.00</div>
<div class="t" style="right:285px;top:684.5px;transform:scaleX(0.9809);transform-origin:right center;line-height:26.25px">4,189.50</div>
<div class="t" style="left:1420px;top:684.5px;transform:scaleX(0.9808);transform-origin:left center;line-height:26.25px">456789123</div>
<div class="t" style="left:1506px;top:684.5px;transform:scaleX(0.9541);transform-origin:left center;line-height:26.25px">A</div>
<div class="t" style="left:1600px;top:684.5px;transform:scaleX(0.9673);transform-origin:left center;line-height:26.25px">Harry Jackson</div>
<svg class="a" style="left:8px;top:9.5px" width="7" height="11" viewBox="0 0 7 11"><path d="M0.5 0.5 L6 5.5 L0.5 10.5 Z" fill="#1c1c28"/></svg>
<div class="a" style="left:45.5px;top:1.0px;width:92px;height:25.25px;border:1px dotted #202028"></div>
</div>
<div class="a" style="left:1897px;top:245.5px;width:21px;height:728.5px;background:#f3f3f6"></div>
<svg class="a" style="left:1903px;top:253px" width="10" height="7" viewBox="0 0 10 7"><path d="M0.5 6 L5 0.8 L9.5 6 Z" fill="#8a8b94"/></svg>
<div class="a" style="left:1903.5px;top:267.5px;width:9px;height:273px;background:linear-gradient(90deg,#f0f0f3,#d8d9de);border:1px solid #acadb5;border-radius:5px"></div>
<svg class="a" style="left:1903px;top:960px" width="10" height="7" viewBox="0 0 10 7"><path d="M0.5 1 L5 6.2 L9.5 1 Z" fill="#8a8b94"/></svg>
<div class="a" style="left:201px;top:974px;width:1696px;height:21px;background:#f3f3f6"></div>
<div class="a" style="left:1897px;top:974px;width:21px;height:21px;background:#ececf0"></div>
<svg class="a" style="left:207px;top:979px" width="7" height="10" viewBox="0 0 7 10"><path d="M6 0.5 L0.8 5 L6 9.5 Z" fill="#8a8b94"/></svg>
<div class="a" style="left:222.5px;top:979.5px;width:1113px;height:9px;background:linear-gradient(#f0f0f3,#d6d7dc);border:1px solid #acadb5;border-radius:5px"></div>
<svg class="a" style="left:1883px;top:979px" width="7" height="10" viewBox="0 0 7 10"><path d="M1 0.5 L6.2 5 L1 9.5 Z" fill="#8a8b94"/></svg>
<div class="a" style="left:2.5px;top:181.5px;width:195px;height:812px;background:#ffffff;border:1px solid #a9aab3"></div>
<div class="a" style="left:3.5px;top:182.5px;width:193px;height:25px;background:#e3e4e9;border-bottom:1px solid #c2c3ca;border-top:1px solid #f6f6f8;border-left:1px solid #f6f6f8"></div>
<div class="t" style="left:10px;top:183px;font-weight:bold;color:#9ba3b5;line-height:25px">Links</div>
<svg class="a" style="left:176px;top:189px" width="10" height="11" viewBox="0 0 10 11"><rect x="2" y="0.5" width="6" height="6.5" fill="#7c7e8a"/><rect x="2.8" y="1" width="1" height="5.5" fill="#eeeef2"/><rect x="0.5" y="6.6" width="9" height="1.4" fill="#7c7e8a"/><rect x="4.3" y="7.5" width="1.3" height="3.3" fill="#7c7e8a"/></svg>
<div class="a" style="left:5.5px;top:208.5px;width:189px;height:23.5px;background:#ffffff;border:1px solid #cfd0d5;border-top-color:#b4b5bc"></div>
<div class="t" style="left:9px;top:208.5px;transform:scaleX(1.0139);transform-origin:left center;color:#a0a1ab;line-height:23.5px;-webkit-text-stroke:0.1px currentColor">Enter text to search...</div>
<svg class="a" style="left:177px;top:213px" width="13" height="15" viewBox="0 0 13 15"><circle cx="8" cy="5.2" r="3.6" stroke="#3e3e4a" stroke-width="1.4" fill="none"/><path d="M5.6 8 L1.2 13.3" stroke="#3e3e4a" stroke-width="1.5"/></svg>
<div class="t" style="left:22px;top:251px;font-weight:bold;font-size:16px;color:#1b1b30;line-height:20px">Functions</div>
<div class="a" style="left:22.5px;top:290.5px;width:160px;height:74px;background:linear-gradient(90deg,#a7a7a7,#c8c8c8 45%,#f1f1f1);border:1.3px solid #3cb46e"></div>
<div class="t" style="left:37px;top:301px;transform:scaleX(0.9527);transform-origin:left center;color:#f4f4f4;line-height:18px">Documents</div>
<div class="t" style="left:9px;top:1006px;transform:scaleX(0.9519);transform-origin:left center;color:#252535;line-height:18px">Open Windows</div>
<svg class="a" style="left:104px;top:1011px" width="8" height="5" viewBox="0 0 8 5"><path d="M0 0 H8 L4 4.5 Z" fill="#252535"/></svg>
<div class="a" style="left:1464px;top:1001px;width:1px;height:25px;background:#b3b4bc"></div>
<div class="a" style="left:1465px;top:1001px;width:1px;height:25px;background:#eeeff2"></div>
<div class="a" style="left:1567px;top:1001px;width:1px;height:25px;background:#b3b4bc"></div>
<div class="a" style="left:1568px;top:1001px;width:1px;height:25px;background:#eeeff2"></div>
<div class="a" style="left:1658px;top:1001px;width:1px;height:25px;background:#b3b4bc"></div>
<div class="a" style="left:1659px;top:1001px;width:1px;height:25px;background:#eeeff2"></div>
<div class="a" style="left:1788px;top:1001px;width:1px;height:25px;background:#b3b4bc"></div>
<div class="a" style="left:1789px;top:1001px;width:1px;height:25px;background:#eeeff2"></div>
<div class="t" style="left:1476px;top:1006px;transform:scaleX(0.9542);transform-origin:left center;color:#252535;line-height:18px">User : Bianca</div>
<div class="t" style="left:1577px;top:1006px;transform:scaleX(1.0172);transform-origin:left center;color:#252535;line-height:18px">08/12/2022</div>
<div class="t" style="left:1668px;top:1006px;transform:scaleX(0.9742);transform-origin:left center;color:#252535;line-height:18px">Version : 2.4.0.18</div>
<div class="t" style="left:1797px;top:1006px;transform:scaleX(0.9362);transform-origin:left center;color:#252535;line-height:18px">Example Company</div>
<svg class="a" style="left:2px;top:7px" width="18" height="20.160000000000004" viewBox="0 0 20 22.4"><defs><linearGradient id="hg2" x1="0" y1="0" x2="0" y2="1"><stop offset="0" stop-color="#707074"/><stop offset="1" stop-color="#3a3a3e"/></linearGradient></defs><path d="M10 0.5 L19 5.6 V16.8 L10 21.9 L1 16.8 V5.6 Z" fill="url(#hg2)"/><rect x="1.5" y="8.6" width="17" height="3.4" fill="#f0f0f2"/><rect x="3.6" y="9.6" width="3.2" height="1.4" fill="#3a3a3e"/><rect x="8.4" y="9.6" width="3.2" height="1.4" fill="#3a3a3e"/><rect x="13.2" y="9.6" width="3.2" height="1.4" fill="#3a3a3e"/><circle cx="10" cy="15" r="2" stroke="#c02020" stroke-width="1" fill="none"/></svg>
<svg class="a" style="left:48px;top:13px" width="10" height="9" viewBox="0 0 10 9"><rect x="1" y="0.5" width="8" height="1.4" fill="#2a2a40"/><path d="M1 3.2 H9 L5 8 Z" fill="#2a2a40"/></svg>
<div class="t" style="left:722px;top:9px;font-weight:bold;font-size:14.4px;line-height:17px;color:#2a2a36"><span style="color:#6a6d80">Purchase Invoice Listing</span> - BPO: Version 2.4.0.18 - Example Company</div>
<div class="a" style="left:1805.5px;top:8px;width:35px;height:18px;background:linear-gradient(#f1f1f4,#d9dae0);border:1px solid #aeafb8;border-radius:3px"></div>
<div class="a" style="left:1844px;top:8px;width:35px;height:18px;background:linear-gradient(#f1f1f4,#d9dae0);border:1px solid #aeafb8;border-radius:3px"></div>
<div class="a" style="left:1883px;top:8px;width:35px;height:18px;background:linear-gradient(#f1f1f4,#d9dae0);border:1px solid #aeafb8;border-radius:3px"></div>
<div class="a" style="left:1817.5px;top:18.0px;width:11px;height:3px;background:#6c6d78"></div>
<svg class="a" style="left:1854.5px;top:10.5px" width="14" height="12" viewBox="0 0 14 12"><rect x="5" y="1" width="8" height="6" stroke="#6c6d78" stroke-width="2" fill="none"/><rect x="1" y="4.5" width="8" height="6.5" stroke="#6c6d78" stroke-width="2" fill="#e0e0e6"/></svg>
<svg class="a" style="left:1894.5px;top:11.5px" width="12" height="10" viewBox="0 0 12 10"><path d="M1 0.5 L11 9.5 M11 0.5 L1 9.5" stroke="#6c6d78" stroke-width="2.6"/></svg>
<div class="a" style="left:1826.5px;top:48.5px;width:11px;height:3px;background:#6c6d78"></div>
<svg class="a" style="left:1859px;top:40px" width="14" height="12" viewBox="0 0 14 12"><rect x="5" y="1" width="8" height="6" stroke="#6c6d78" stroke-width="2" fill="none"/><rect x="1" y="4.5" width="8" height="6.5" stroke="#6c6d78" stroke-width="2" fill="#e0e0e6"/></svg>
<svg class="a" style="left:1895.5px;top:42px" width="12" height="10" viewBox="0 0 12 10"><path d="M1 0.5 L11 9.5 M11 0.5 L1 9.5" stroke="#6c6d78" stroke-width="2.6"/></svg>
<div class="a" style="left:3px;top:34px;width:72px;height:26px;background:#c3c4cc;border-radius:2px"></div>
<div class="a" style="left:5px;top:36px;width:67px;height:22px;background:radial-gradient(ellipse at 75% 20%,#dcc6ee 0%,rgba(220,198,238,0) 45%),linear-gradient(100deg,#eee6f8 0%,#dcd2f0 35%,#ece4f6 50%,#dccbef 78%,#e4d6f2 100%);border:1px solid #f4f0fa"></div>
<svg class="a" style="left:26px;top:34px" width="22" height="24.64" viewBox="0 0 20 22.4"><defs><linearGradient id="hg26" x1="0" y1="0" x2="0" y2="1"><stop offset="0" stop-color="#707074"/><stop offset="1" stop-color="#3a3a3e"/></linearGradient></defs><path d="M10 0.5 L19 5.6 V16.8 L10 21.9 L1 16.8 V5.6 Z" fill="url(#hg26)"/><rect x="1.5" y="8.6" width="17" height="3.4" fill="#f0f0f2"/><rect x="3.6" y="9.6" width="3.2" height="1.4" fill="#3a3a3e"/><rect x="8.4" y="9.6" width="3.2" height="1.4" fill="#3a3a3e"/><rect x="13.2" y="9.6" width="3.2" height="1.4" fill="#3a3a3e"/><circle cx="10" cy="15" r="2" stroke="#c02020" stroke-width="1" fill="none"/></svg>
<div class="a" style="left:76px;top:35px;width:59px;height:27px;background:#ffffff;border:1px solid #b5b6be;border-bottom:none;border-radius:2px 2px 0 0"></div>
<div class="t" style="left:88px;top:41px;transform:scaleX(0.9202);transform-origin:left center;color:#1e1e2a;line-height:18px">Home</div>
<div class="t" style="left:154px;top:41px;transform:scaleX(0.9647);transform-origin:left center;color:#4e4e60;line-height:18px">Equipment / Locations</div>
<div class="t" style="left:318px;top:41px;transform:scaleX(0.9862);transform-origin:left center;color:#4e4e60;line-height:18px">Contract</div>
<div class="t" style="left:403px;top:41px;transform:scaleX(0.9191);transform-origin:left center;color:#4e4e60;line-height:18px">Finance / HR</div>
<div class="t" style="left:512px;top:41px;transform:scaleX(1.0609);transform-origin:left center;color:#4e4e60;line-height:18px">Inventory</div>
<div class="t" style="left:604px;top:41px;transform:scaleX(0.9831);transform-origin:left center;color:#4e4e60;line-height:18px">Maintenance / Projects</div>
<div class="t" style="left:774px;top:41px;transform:scaleX(0.9899);transform-origin:left center;color:#4e4e60;line-height:18px">Manufacturing</div>
<div class="t" style="left:893px;top:41px;transform:scaleX(0.9687);transform-origin:left center;color:#4e4e60;line-height:18px">Procurement</div>
<div class="t" style="left:1001px;top:41px;transform:scaleX(0.9086);transform-origin:left center;color:#4e4e60;line-height:18px">Sales</div>
<div class="t" style="left:1065px;top:41px;transform:scaleX(0.9542);transform-origin:left center;color:#4e4e60;line-height:18px">Service</div>
<div class="t" style="left:1141px;top:41px;transform:scaleX(0.9645);transform-origin:left center;color:#4e4e60;line-height:18px">Reporting</div>
<div class="t" style="left:1233px;top:41px;transform:scaleX(0.9591);transform-origin:left center;color:#4e4e60;line-height:18px">Utilities</div>
<div class="a" style="left:322.5px;top:62px;width:1px;height:112px;background:linear-gradient(#d4d5db,#c4c5cc 50%,#c9cad1)"></div>
<div class="a" style="left:323.5px;top:62px;width:1px;height:112px;background:#fbfbfc"></div>
<div class="a" style="left:457px;top:62px;width:1px;height:112px;background:linear-gradient(#d4d5db,#c4c5cc 50%,#c9cad1)"></div>
<div class="a" style="left:458px;top:62px;width:1px;height:112px;background:#fbfbfc"></div>
<div class="a" style="left:646.5px;top:62px;width:1px;height:112px;background:linear-gradient(#d4d5db,#c4c5cc 50%,#c9cad1)"></div>
<div class="a" style="left:647.5px;top:62px;width:1px;height:112px;background:#fbfbfc"></div>
<div class="a" style="left:767.5px;top:62px;width:1px;height:112px;background:linear-gradient(#d4d5db,#c4c5cc 50%,#c9cad1)"></div>
<div class="a" style="left:768.5px;top:62px;width:1px;height:112px;background:#fbfbfc"></div>
<div class="a" style="left:981.5px;top:62px;width:1px;height:112px;background:linear-gradient(#d4d5db,#c4c5cc 50%,#c9cad1)"></div>
<div class="a" style="left:982.5px;top:62px;width:1px;height:112px;background:#fbfbfc"></div>
<div class="a" style="left:10px;top:151.5px;width:308px;height:1px;background:linear-gradient(90deg,rgba(220,221,227,0),#dcdde3 15%,#dcdde3 85%,rgba(220,221,227,0))"></div>
<div class="a" style="left:330px;top:151.5px;width:122px;height:1px;background:linear-gradient(90deg,rgba(220,221,227,0),#dcdde3 15%,#dcdde3 85%,rgba(220,221,227,0))"></div>
<div class="a" style="left:464px;top:151.5px;width:178px;height:1px;background:linear-gradient(90deg,rgba(220,221,227,0),#dcdde3 15%,#dcdde3 85%,rgba(220,221,227,0))"></div>
<div class="a" style="left:654px;top:151.5px;width:108px;height:1px;background:linear-gradient(90deg,rgba(220,221,227,0),#dcdde3 15%,#dcdde3 85%,rgba(220,221,227,0))"></div>
<div class="a" style="left:775px;top:151.5px;width:201px;height:1px;background:linear-gradient(90deg,rgba(220,221,227,0),#dcdde3 15%,#dcdde3 85%,rgba(220,221,227,0))"></div>
<svg class="a" style="left:312.5px;top:163px" width="7" height="7" viewBox="0 0 7 7"><path d="M6.5 0.5 V6.5 H0.5 Z" fill="#a9aab2"/></svg>
<svg class="a" style="left:447.5px;top:163px" width="7" height="7" viewBox="0 0 7 7"><path d="M6.5 0.5 V6.5 H0.5 Z" fill="#a9aab2"/></svg>
<svg class="a" style="left:635.5px;top:163px" width="7" height="7" viewBox="0 0 7 7"><path d="M6.5 0.5 V6.5 H0.5 Z" fill="#a9aab2"/></svg>
<svg class="a" style="left:757.5px;top:163px" width="7" height="7" viewBox="0 0 7 7"><path d="M6.5 0.5 V6.5 H0.5 Z" fill="#a9aab2"/></svg>
<svg class="a" style="left:970.5px;top:163px" width="7" height="7" viewBox="0 0 7 7"><path d="M6.5 0.5 V6.5 H0.5 Z" fill="#a9aab2"/></svg>
<div class="t" style="left:-121.5px;width:300px;text-align:center;top:113px;transform:scaleX(0.9708);transform-origin:center center;color:#20202c;line-height:18px">Add</div>
<div class="t" style="left:-64.5px;width:300px;text-align:center;top:113px;transform:scaleX(0.9496);transform-origin:center center;color:#20202c;line-height:18px">Edit</div>
<div class="t" style="left:-9px;width:300px;text-align:center;top:113px;transform:scaleX(0.9749);transform-origin:center center;color:#20202c;line-height:18px">Delete</div>
<div class="t" style="left:48px;width:300px;text-align:center;top:113px;transform:scaleX(0.9227);transform-origin:center center;color:#20202c;line-height:18px">View</div>
<div class="t" style="left:209.5px;width:300px;text-align:center;top:113px;color:#20202c;line-height:18px">Approve</div>
<div class="t" style="left:273px;width:300px;text-align:center;top:113px;transform:scaleX(0.9268);transform-origin:center center;color:#20202c;line-height:18px">Decline</div>
<div class="t" style="left:357px;width:300px;text-align:center;top:113px;transform:scaleX(0.9811);transform-origin:center center;color:#20202c;line-height:18px">Save Layout</div>
<div class="t" style="left:447px;width:300px;text-align:center;top:113px;transform:scaleX(0.9749);transform-origin:center center;color:#20202c;line-height:18px">Workspaces</div>
<div class="t" style="left:528px;width:300px;text-align:center;top:113px;transform:scaleX(0.9727);transform-origin:center center;color:#20202c;line-height:18px">Print</div>
<div class="t" style="left:584px;width:300px;text-align:center;top:113px;transform:scaleX(1.0066);transform-origin:center center;color:#20202c;line-height:18px">Export</div>
<div class="t" style="left:794px;width:300px;text-align:center;top:113px;transform:scaleX(0.9606);transform-origin:center center;color:#20202c;line-height:18px">Refresh</div>
<div class="t" style="left:121px;width:300px;text-align:center;top:113px;transform:scaleX(0.9779);transform-origin:center center;color:#20202c;line-height:18px">Add Back to</div>
<div class="t" style="left:121px;width:300px;text-align:center;top:129px;transform:scaleX(0.9781);transform-origin:center center;color:#20202c;line-height:18px">Back Invoice</div>
<div class="t" style="left:3px;width:300px;text-align:center;top:155px;transform:scaleX(0.9621);transform-origin:center center;color:#9ea0ad;line-height:18px">Maintain</div>
<div class="t" style="left:233px;width:300px;text-align:center;top:155px;transform:scaleX(0.9312);transform-origin:center center;color:#9ea0ad;line-height:18px">Process</div>
<div class="t" style="left:395px;width:300px;text-align:center;top:155px;transform:scaleX(0.9473);transform-origin:center center;color:#9ea0ad;line-height:18px">Format</div>
<div class="t" style="left:550px;width:300px;text-align:center;top:155px;transform:scaleX(0.9727);transform-origin:center center;color:#9ea0ad;line-height:18px">Print</div>
<div class="t" style="left:717px;width:300px;text-align:center;top:155px;transform:scaleX(0.9815);transform-origin:center center;color:#9ea0ad;line-height:18px">Current</div>
<svg class="a" style="left:592px;top:132px" width="10" height="6" viewBox="0 0 10 6"><path d="M0.5 0.5 H9.5 L5 5.5 Z" fill="#1e1e28"/></svg>
<div class="a" style="left:780.5px;top:74px;width:124px;height:26.5px;background:#ffffff;border:1px solid #b4b5bd"></div>
<div class="t" style="left:786px;top:75px;transform:scaleX(0.9701);transform-origin:left center;color:#20202c;line-height:26.5px">Durban</div>
<svg class="a" style="left:889px;top:85px" width="10" height="6" viewBox="0 0 10 6"><path d="M0.5 0.5 H9.5 L5 5.5 Z" fill="#1e1e28"/></svg>
<div class="a" style="left:780.5px;top:111.5px;width:124px;height:26.5px;background:#ffffff;border:1px solid #b4b5bd"></div>
<div class="t" style="left:786px;top:112.5px;transform:scaleX(0.9543);transform-origin:left center;color:#20202c;line-height:26.5px">New</div>
<svg class="a" style="left:889px;top:122.5px" width="10" height="6" viewBox="0 0 10 6"><path d="M0.5 0.5 H9.5 L5 5.5 Z" fill="#1e1e28"/></svg>
<svg class="a" style="left:1893px;top:154px" width="18" height="13" viewBox="0 0 18 13"><path d="M2 8.8 L9 2 L16 8.8 L13.8 11 L9 6.4 L4.2 11 Z" fill="#f6f6f8" stroke="#6c6d78" stroke-width="1.3" stroke-linejoin="round"/></svg>
<svg class="a" style="left:12px;top:69px" width="37" height="37" viewBox="0 0 37 37"><defs><linearGradient id="ga" x1="0" y1="0" x2="0" y2="1"><stop offset="0" stop-color="#c6e6f8"/><stop offset=".5" stop-color="#7bbbe6"/><stop offset="1" stop-color="#3f86cc"/></linearGradient></defs><circle cx="17.8" cy="18.2" r="16.8" fill="url(#ga)" stroke="#3b78bb" stroke-width="1.1"/><path d="M14.100000000000001 9.799999999999999 Q14.100000000000001 8.6 15.3 8.6 H20.3 Q21.5 8.6 21.5 9.799999999999999 V14.5 H26.2 Q27.4 14.5 27.4 15.7 V20.7 Q27.4 21.9 26.2 21.9 H21.5 V26.599999999999998 Q21.5 27.799999999999997 20.3 27.799999999999997 H15.3 Q14.100000000000001 27.799999999999997 14.100000000000001 26.599999999999998 V21.9 H9.4 Q8.200000000000001 21.9 8.200000000000001 20.7 V15.7 Q8.200000000000001 14.5 9.4 14.5 H14.100000000000001 Z" fill="#eef3f9" stroke="#3d78b6" stroke-width="1.2"/></svg>
<svg class="a" style="left:70px;top:68px" width="38" height="40" viewBox="0 0 38 40"><defs><linearGradient id="ge" x1="0" y1="0" x2="1" y2="1"><stop offset="0" stop-color="#ffffff"/><stop offset="1" stop-color="#dde4f2"/></linearGradient><linearGradient id="gpen" x1="0" y1="0" x2="1" y2="0"><stop offset="0" stop-color="#f8d070"/><stop offset="1" stop-color="#e09a20"/></linearGradient></defs><path d="M8 1.5 H28 V34 H1.5 V8 Z" fill="url(#ge)" stroke="#8ea2cc" stroke-width="1.3"/><path d="M1.5 8 H8 V1.5" fill="#dfe6f3" stroke="#8ea2cc" stroke-width="1.3"/><g transform="translate(-4 4) rotate(45 23 23)"><rect x="19.5" y="2" width="7.5" height="5" rx="1.5" fill="#e05a50"/><rect x="19.5" y="6.5" width="7.5" height="3" fill="#8ab0d8"/><rect x="19.5" y="9.5" width="7.5" height="21" fill="url(#gpen)" stroke="#9a6a20" stroke-width=".6"/><path d="M19.5 30.5 L27 30.5 L23.25 39 Z" fill="#f2dbb0"/><path d="M22 36 L24.5 36 L23.25 39 Z" fill="#2a2a40"/></g></svg>
<svg class="a" style="left:126px;top:72px" width="34" height="33" viewBox="0 0 34 33"><defs><linearGradient id="gd" x1="0" y1="0" x2="0" y2="1"><stop offset="0" stop-color="#f4a596"/><stop offset=".5" stop-color="#e0553f"/><stop offset="1" stop-color="#c42c1e"/></linearGradient></defs><path d="M6 5.5 L26 25.5 M26 5.5 L6 25.5" stroke="#b8362a" stroke-width="10" stroke-linecap="round"/><path d="M6 5.5 L26 25.5 M26 5.5 L6 25.5" stroke="url(#gd)" stroke-width="8" stroke-linecap="round"/></svg>
<svg class="a" style="left:183px;top:67px" width="32" height="40" viewBox="0 0 32 40"><rect x="1.5" y="1.5" width="29" height="36" fill="#f4f6fb" stroke="#8ea2cc" stroke-width="1.3"/><rect x="6" y="6" width="20" height="6" fill="#7ab4e6" stroke="#4f86c6" stroke-width=".8"/><rect x="6" y="15.0" width="20" height="1.4" fill="#7f9fd0"/><rect x="6" y="18.2" width="20" height="1.4" fill="#7f9fd0"/><rect x="6" y="21.4" width="20" height="1.4" fill="#7f9fd0"/><rect x="6" y="24.6" width="20" height="1.4" fill="#7f9fd0"/><rect x="6" y="27.8" width="20" height="1.4" fill="#7f9fd0"/><rect x="6" y="31.0" width="20" height="1.4" fill="#7f9fd0"/></svg>
<svg class="a" style="left:253px;top:68px" width="40" height="40" viewBox="0 0 40 40"><rect x="1.5" y="1.5" width="29" height="36" fill="#f4f6fb" stroke="#8ea2cc" stroke-width="1.3"/><rect x="5" y="6" width="16" height="6" fill="#f2b54a" stroke="#d68a1e" stroke-width=".8"/><rect x="6" y="15.0" width="16" height="1.4" fill="#7f9fd0"/><rect x="6" y="18.2" width="16" height="1.4" fill="#7f9fd0"/><rect x="6" y="21.4" width="16" height="1.4" fill="#7f9fd0"/><rect x="6" y="24.6" width="16" height="1.4" fill="#7f9fd0"/><rect x="6" y="27.8" width="16" height="1.4" fill="#7f9fd0"/><rect x="6" y="31.0" width="16" height="1.4" fill="#7f9fd0"/><path d="M27.6 2 Q27.6 1 28.6 1 H32.4 Q33.4 1 33.4 2 V6.1 H37.5 Q38.5 6.1 38.5 7.1 V10.9 Q38.5 11.9 37.5 11.9 H33.4 V16 Q33.4 17 32.4 17 H28.6 Q27.6 17 27.6 16 V11.9 H23.5 Q22.5 11.9 22.5 10.9 V7.1 Q22.5 6.1 23.5 6.1 H27.6 Z" fill="#78b4e8" stroke="#3a78bc" stroke-width="1.1"/></svg>
<svg class="a" style="left:341px;top:69px" width="37" height="37" viewBox="0 0 37 37"><defs><radialGradient id="gp" cx=".4" cy=".3" r=".8"><stop offset="0" stop-color="#c8ea7a"/><stop offset=".6" stop-color="#6cb83a"/><stop offset="1" stop-color="#3f8a20"/></radialGradient></defs><circle cx="18.5" cy="18.5" r="17.3" fill="url(#gp)" stroke="#4a8e2a" stroke-width="1.2"/><path d="M8 19 Q10 17 11.5 16.5 L15.5 22 Q21 13 28 8.5 Q29.5 9.5 30 10.5 Q22 18 16 28 Q12 22 8 19 Z" fill="#eef3f8" stroke="#5d8f48" stroke-width=".8" stroke-linejoin="round"/></svg>
<svg class="a" style="left:405px;top:69px" width="37" height="37" viewBox="0 0 37 37"><defs><radialGradient id="gx" cx=".4" cy=".3" r=".8"><stop offset="0" stop-color="#f4a090"/><stop offset=".6" stop-color="#d8402e"/><stop offset="1" stop-color="#a82418"/></radialGradient></defs><circle cx="18.5" cy="18.5" r="17.3" fill="url(#gx)" stroke="#a83022" stroke-width="1.2"/><path d="M12.5 12 L24.5 24 M24.5 12 L12.5 24" stroke="#a83226" stroke-width="7.4" stroke-linecap="round"/><path d="M12.5 12 L24.5 24 M24.5 12 L12.5 24" stroke="#eef0f5" stroke-width="5.6" stroke-linecap="round"/></svg>
<svg class="a" style="left:489px;top:68px" width="38" height="38" viewBox="0 0 38 38"><rect x="1.5" y="1.5" width="30" height="30" fill="#f2f5fb" stroke="#7b9ccc" stroke-width="1.2" rx="1.5"/><rect x="2" y="2" width="29" height="7.5" fill="#7fb4e4"/><path d="M11.5 1.5 V31.5 M21.5 1.5 V31.5 M1.5 9.5 H31.5 M1.5 17 H31.5 M1.5 24.5 H31.5" stroke="#a7bddf" stroke-width="1"/><path d="M17 22 L31.5 35.5" stroke="#5f6670" stroke-width="6.6" stroke-linecap="round"/><path d="M17 22 L31.5 35.5" stroke="#b4bac4" stroke-width="4.6" stroke-linecap="round"/><circle cx="15.5" cy="20" r="7.2" fill="#b4bac4" stroke="#5f6670" stroke-width="1.1"/><path d="M12 12.5 L16.5 17 L14.5 21.5 L9.5 19 Z" fill="#f2f5fb"/><circle cx="15.5" cy="20" r="2.2" fill="#8a929c"/></svg>
<svg class="a" style="left:577px;top:67px" width="40" height="40" viewBox="0 0 40 40"><defs><linearGradient id="gw" x1="0" y1="0" x2="0" y2="1"><stop offset="0" stop-color="#9cc8ee"/><stop offset="1" stop-color="#5f9fdc"/></linearGradient></defs><rect x="2" y="2.0" width="16.5" height="10" rx="1.3" fill="url(#gw)" stroke="#4a84c4" stroke-width="1"/><rect x="21" y="2.0" width="16.5" height="10" rx="1.3" fill="url(#gw)" stroke="#4a84c4" stroke-width="1"/><rect x="2" y="14.8" width="16.5" height="10" rx="1.3" fill="url(#gw)" stroke="#4a84c4" stroke-width="1"/><rect x="21" y="14.8" width="16.5" height="10" rx="1.3" fill="url(#gw)" stroke="#4a84c4" stroke-width="1"/><rect x="2" y="27.6" width="16.5" height="10" rx="1.3" fill="url(#gw)" stroke="#4a84c4" stroke-width="1"/><rect x="21" y="27.6" width="16.5" height="10" rx="1.3" fill="url(#gw)" stroke="#4a84c4" stroke-width="1"/></svg>
<svg class="a" style="left:659px;top:67px" width="40" height="40" viewBox="0 0 40 40"><rect x="9" y="3" width="20" height="16" fill="#eef1f7" stroke="#8a96aa" stroke-width="1"/><path d="M2 18 Q2 14 7 14 H31 Q36 14 36 18 V30 H2 Z" fill="#d8deea" stroke="#7d889c" stroke-width="1.2"/><rect x="6" y="15" width="26" height="6" fill="#4e5a6e" rx="2"/><rect x="9" y="26" width="20" height="10" fill="#eef2f8" stroke="#7d889c" stroke-width="1"/><rect x="11" y="29" width="16" height="4" fill="#5aa0dc"/><circle cx="31" cy="9" r="8.3" fill="#6ab83a" stroke="#4a8e2a" stroke-width="1"/><text x="31" y="13.5" font-family="Liberation Sans" font-weight="bold" font-size="12" text-anchor="middle" fill="#243a10">?</text></svg>
<svg class="a" style="left:713px;top:68px" width="40" height="40" viewBox="0 0 40 40"><path d="M7 1.5 H25 L31 7.5 V34 H7 Z" fill="#f2f5fb" stroke="#8ea2cc" stroke-width="1.2"/><path d="M25 1.5 V7.5 H31" fill="#dfe6f3" stroke="#8ea2cc" stroke-width="1"/><rect x="0" y="6" width="22.5" height="10.5" rx="1" fill="#17844c"/><text x="11.3" y="14.6" font-family="Liberation Mono" font-weight="bold" font-size="8.6" text-anchor="middle" fill="#cfeedd" textLength="19" lengthAdjust="spacingAndGlyphs">XLSX</text><rect x="20" y="19" width="19" height="18" fill="#3a4250" rx="1.5"/><rect x="24" y="20" width="11" height="6" fill="#e8ecf2"/><rect x="23" y="29" width="13" height="7" fill="#e6eaf0"/><rect x="31" y="21" width="2" height="4" fill="#3a4250"/></svg>
<svg class="a" style="left:924px;top:70px" width="42" height="34" viewBox="0 0 42 34"><defs><linearGradient id="gr" x1="0" y1="0" x2="0" y2="1"><stop offset="0" stop-color="#c4e4f8"/><stop offset=".6" stop-color="#7db8e6"/><stop offset="1" stop-color="#4a8ed0"/></linearGradient></defs><path d="M9.5 15 A11.5 11.5 0 0 0 29 26" stroke="#4a88c6" stroke-width="7.4" fill="none"/><path d="M9.5 15 A11.5 11.5 0 0 0 29 26" stroke="url(#gr)" stroke-width="5.4" fill="none"/><path d="M32.5 19 A11.5 11.5 0 0 0 13 8" stroke="#4a88c6" stroke-width="7.4" fill="none"/><path d="M32.5 19 A11.5 11.5 0 0 0 13 8" stroke="url(#gr)" stroke-width="5.4" fill="none"/><path d="M1.5 16 L9.5 1.5 L17.5 16 Z" fill="url(#gr)" stroke="#4a88c6" stroke-width="1" stroke-linejoin="round"/><path d="M24.5 18 L40.5 18 L32.5 32.5 Z" fill="url(#gr)" stroke="#4a88c6" stroke-width="1" stroke-linejoin="round"/></svg>
<div class="a" style="left:243.5px;top:271.5px;width:1658px;height:59px;border:3px solid #4169e1"></div>
<svg class="a" style="left:320px;top:175px" width="40" height="100" viewBox="0 0 40 100"><circle cx="18" cy="17" r="13.6" fill="#4169e1"/><path d="M18 22 L20.6 84" stroke="#4169e1" stroke-width="2.6"/><path d="M15.3 81 L25.4 81 L20.6 96 Z" fill="#4169e1"/></svg>
</body></html>
